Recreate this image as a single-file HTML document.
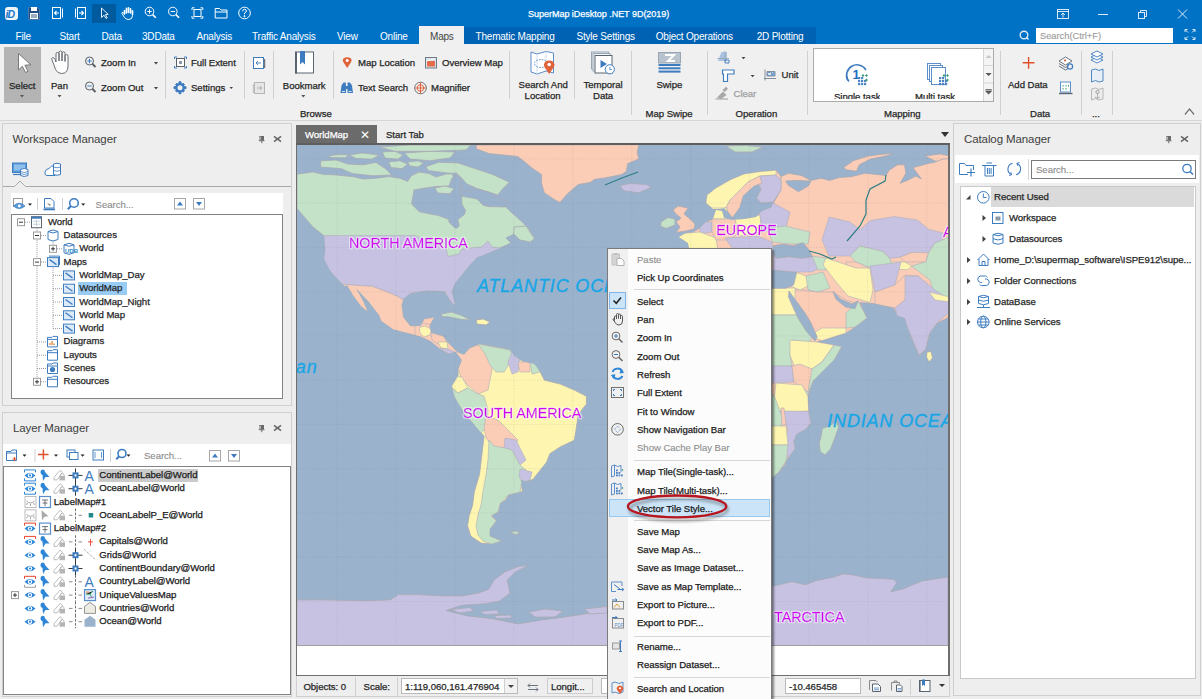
<!DOCTYPE html>
<html><head><meta charset="utf-8"><style>
*{margin:0;padding:0;box-sizing:border-box}
html,body{width:1202px;height:699px;overflow:hidden;background:#EDEDED;font-family:"Liberation Sans",sans-serif;font-size:10px;color:#262626}
.a{position:absolute}
.t{position:absolute;white-space:nowrap;line-height:12px;font-size:9.6px;letter-spacing:-0.05px;-webkit-text-stroke:0.25px currentColor}
#title{left:0;top:0;width:1202px;height:27px;background:#0072C6}
#tabs{left:0;top:27px;width:1202px;height:17px;background:#0072C6}
#ribbon{left:0;top:44px;width:1202px;height:77px;background:#F0F0F0;border-bottom:1px solid #D6D6D6}
.tab{position:absolute;top:30px;color:#fff;font-size:10px;line-height:14px;letter-spacing:-0.2px;white-space:nowrap}
.sep{position:absolute;width:1px;background:#D0D0D0}
.panel{position:absolute;background:#EEEEEE;border:1px solid #CFCFCF}
.ptitle{position:absolute;font-size:11.5px;color:#404040;white-space:nowrap;letter-spacing:-0.1px}
.tree{position:absolute;background:#fff;border:1px solid #828282}
.mi{position:absolute;left:29px;font-size:9.6px;line-height:12px;color:#1a1a1a;white-space:nowrap;letter-spacing:-0.05px;-webkit-text-stroke:0.25px currentColor}
.msep{position:absolute;left:26px;width:136px;height:1px;background:#D7D7D7}

</style></head><body>
<!-- TITLE BAR -->
<div id="title" class="a"></div>
<div id="tabs" class="a"></div>
<div class="a" style="left:464px;top:27px;width:352px;height:17px;background:#0062B2"></div>
<div class="a" style="left:419px;top:26px;width:45px;height:18px;background:#F0F0F0"></div>
<div class="a" style="left:92px;top:4px;width:24px;height:19px;background:#005A9E"></div>
<!--TITLEICONS-->
<svg class="a" style="left:0;top:0" width="260" height="27" viewBox="0 0 260 27">
<g fill="none" stroke="#fff" stroke-width="1">
<rect x="5" y="7" width="13" height="13" rx="3" fill="#F2F6FA" stroke="none"/>
<text x="5.6" y="17.6" font-size="10.5" font-weight="bold" font-style="italic" fill="#1677C9" stroke="none" letter-spacing="-1">iD</text>
<path d="M28.5 7.5 H37.5 L39.5 9.5 V19.5 H28.5 Z" fill="#1D4F86" stroke="#4A78AA" stroke-width="1"/>
<rect x="31" y="7" width="6" height="4" fill="#fff" stroke="none"/>
<rect x="30" y="13" width="8" height="6" fill="#fff" stroke="none"/>
<rect x="31" y="14.5" width="6" height="1" fill="#3A5F8A" stroke="none"/><rect x="31" y="16.5" width="6" height="1" fill="#3A5F8A" stroke="none"/>
<rect x="52.5" y="7.5" width="8" height="11"/>
<path d="M62.5 8.5 V17.5"/><path d="M59 13 H54.5 M56.5 11 L54.5 13 L56.5 15" stroke-width="1.1"/>
<rect x="77.5" y="7.5" width="8" height="11"/>
<path d="M75.5 8.5 V17.5"/><path d="M79 13 H83.5 M81.5 11 L83.5 13 L81.5 15" stroke-width="1.1"/>
</g>
<rect x="93" y="4" width="23" height="18" fill="#005A9E"/>
<path d="M101.5 8 L101.5 17.5 L104 15.2 L106 18.5 L107.3 17.8 L105.4 14.6 L108.2 14.3 Z" fill="none" stroke="#fff" stroke-width="0.9"/>
<g fill="none" stroke="#fff" stroke-width="1">
<path d="M124.5 14 V10.5 M126.5 13 V8.3 M128.5 12.5 V7.8 M130.5 13 V8.8 M132.5 14.5 V10.8" stroke-linecap="round" stroke-width="1.6"/><path d="M124.5 14 L123 12.6 Q121.8 12 121.8 13.2 L124.5 17.5 Q126 19.5 128.8 19.5 Q132.5 19.5 132.5 15.5 V14"/>
<circle cx="149.5" cy="11.5" r="4.3"/><path d="M152.6 14.6 L155.8 17.8" stroke-width="1.6"/><path d="M147.3 11.5 H151.7 M149.5 9.3 V13.7"/>
<circle cx="172.8" cy="11.5" r="4.3"/><path d="M175.9 14.6 L179.1 17.8" stroke-width="1.6"/><path d="M170.6 11.5 H175"/>
<rect x="194" y="9.5" width="7" height="7"/>
<path d="M192 10 V7.8 H194.5 M200.5 7.8 H202.8 V10 M202.8 16 V18.2 H200.5 M194.5 18.2 H192 V16"/>
<path d="M215.2 18 V8.5 H219.5 L221 10 H227 V18 Z M215.2 12 H227"/>
<circle cx="244.5" cy="13" r="5.8"/>
<path d="M242.6 11.3 Q242.6 9.3 244.5 9.3 Q246.4 9.3 246.4 11 Q246.4 12.3 244.5 13 V14.3"/><circle cx="244.5" cy="16.2" r="0.6" fill="#fff"/>
</g>
</svg>
<svg class="a" style="left:1010px;top:0" width="192" height="44" viewBox="1010 0 192 44">
<g fill="none" stroke="#fff" stroke-width="1" stroke-opacity="0.85">
<rect x="1057.5" y="9.5" width="11" height="9"/><path d="M1057.5 11.5 H1068.5 M1063 17.5 V13 M1061 15 L1063 13 L1065 15"/>
<path d="M1098 14.5 H1108"/>
<rect x="1138.5" y="12.5" width="6" height="6"/><path d="M1140.5 12.5 V10.5 H1146.5 V16.5 H1144.5"/>
<path d="M1178 9.5 L1187 18.5 M1187 9.5 L1178 18.5"/>
<circle cx="1024" cy="35" r="3.8" stroke-width="1.4"/><path d="M1026.5 37.5 L1028.5 39.5" stroke-width="1.6"/>
<path d="M1185 32 V29.5 H1187.5 M1192.5 29.5 H1195 V32 M1195 37 V39.5 H1192.5 M1187.5 39.5 H1185 V37 M1185.5 30 L1188 32.5 M1194.5 30 L1192 32.5 M1194.5 39 L1192 36.5 M1185.5 39 L1188 36.5"/>
</g>
</svg>

<div class="t" style="left:528px;top:8px;color:#fff;font-size:9px;letter-spacing:-0.02px">SuperMap iDesktop .NET 9D(2019)</div>
<div class="tab" style="left:15.5px">File</div>
<div class="tab" style="left:59.5px">Start</div>
<div class="tab" style="left:101.5px">Data</div>
<div class="tab" style="left:142px">3DData</div>
<div class="tab" style="left:196.5px">Analysis</div>
<div class="tab" style="left:252px">Traffic Analysis</div>
<div class="tab" style="left:337px">View</div>
<div class="tab" style="left:380px">Online</div>
<div class="tab" style="left:430px;color:#444">Maps</div>
<div class="tab" style="left:475.5px">Thematic Mapping</div>
<div class="tab" style="left:576.5px">Style Settings</div>
<div class="tab" style="left:655.7px">Object Operations</div>
<div class="tab" style="left:756.7px">2D Plotting</div>
<div class="a" style="left:1036px;top:28px;width:137px;height:15px;background:#fff"></div>
<div class="t" style="left:1040px;top:30px;color:#9a9a9a;font-size:9.4px;-webkit-text-stroke:0.1px #9a9a9a">Search(Ctrl+F)</div>

<!-- RIBBON -->
<div id="ribbon" class="a"></div>
<div class="a" style="left:4px;top:47px;width:37px;height:56px;background:#B4B4B4"></div>
<div class="t" style="left:9px;top:80px">Select</div>
<div class="t" style="left:51px;top:80px">Pan</div>
<div class="t" style="left:101px;top:57px">Zoom In</div>
<div class="t" style="left:101px;top:82px">Zoom Out</div>
<div class="t" style="left:191px;top:57px">Full Extent</div>
<div class="t" style="left:191px;top:82px">Settings</div>
<div class="t" style="left:282.8px;top:80px">Bookmark</div>
<div class="t" style="left:300px;top:108px">Browse</div>
<div class="t" style="left:358px;top:57px">Map Location</div>
<div class="t" style="left:358px;top:82px">Text Search</div>
<div class="t" style="left:442px;top:57px">Overview Map</div>
<div class="t" style="left:431px;top:82px">Magnifier</div>
<div class="t" style="left:518.6px;top:79px">Search And</div>
<div class="t" style="left:524.6px;top:90px">Location</div>
<div class="t" style="left:583.5px;top:79px">Temporal</div>
<div class="t" style="left:593px;top:90px">Data</div>
<div class="t" style="left:656.4px;top:79px">Swipe</div>
<div class="t" style="left:645.6px;top:108px">Map Swipe</div>
<div class="t" style="left:781.5px;top:69px">Unit</div>
<div class="t" style="left:733.6px;top:88px;color:#A0A0A0">Clear</div>
<div class="t" style="left:735.5px;top:108px">Operation</div>
<div class="t" style="left:884px;top:108px">Mapping</div>
<div class="t" style="left:1008px;top:79px">Add Data</div>
<div class="t" style="left:1030px;top:108px">Data</div>
<div class="t" style="left:1092px;top:108px">...</div>
<div class="sep" style="left:165px;top:51px;height:48px"></div>
<div class="sep" style="left:244px;top:51px;height:48px"></div>
<div class="sep" style="left:273px;top:51px;height:48px"></div>
<div class="sep" style="left:333px;top:51px;height:48px"></div>
<div class="sep" style="left:509px;top:51px;height:48px"></div>
<div class="sep" style="left:574px;top:51px;height:48px"></div>
<div class="sep" style="left:631px;top:51px;height:64px"></div>
<div class="sep" style="left:707px;top:51px;height:64px"></div>
<div class="sep" style="left:807px;top:51px;height:64px"></div>
<div class="sep" style="left:1000px;top:51px;height:64px"></div>
<div class="sep" style="left:1081px;top:51px;height:64px"></div>
<div class="sep" style="left:1112px;top:51px;height:64px"></div>
<div class="a" style="left:813px;top:48px;width:181px;height:54px;background:#fff;border:1px solid #ABABAB"></div>
<div class="a" style="left:983px;top:49px;width:10px;height:52px;border-left:1px solid #D5D5D5;background:#F4F4F4"></div>
<div class="t" style="left:834px;top:91px;height:8px;overflow:hidden">Single task</div>
<div class="t" style="left:915px;top:91px;height:8px;overflow:hidden">Multi task</div>
<svg class="a" style="left:0;top:44px" width="1202" height="78" viewBox="0 44 1202 78">
<!-- Select cursor -->
<path d="M18.5 53.5 L18.5 70 L22.3 66.3 L25.6 72.5 L28 71.3 L24.9 65.2 L30.8 64.8 Z" fill="#fff" stroke="#6E6E6E" stroke-width="0.9"/>
<path d="M20 95 L24 95 L22 97.5 Z" fill="#555"/>
<!-- Pan hand -->
<path d="M54 65 L52 60 Q51 58 52.6 57.6 Q54 57.4 55 59.5 L56 62 L56 54 Q56 52.4 57.5 52.4 Q59 52.4 59 54 L59 61 L59 52.5 Q59 51 60.5 51 Q62 51 62 52.5 L62 61 L62 53.3 Q62 51.8 63.5 51.8 Q65 51.8 65 53.3 L65 61.5 L65 56 Q65 54.6 66.5 54.6 Q68 54.6 68 56 L68 66 Q68 73.5 61.5 73.5 Q57.5 73.5 55.5 69.5 Z" fill="#fff" stroke="#5A5F66" stroke-width="0.9"/>
<path d="M57.5 95 L61.5 95 L59.5 97.5 Z" fill="#555"/>
<!-- zoom in/out -->
<g fill="none" stroke="#5A5F66" stroke-width="1">
<circle cx="89.5" cy="61" r="4"/><path d="M92.5 64 L95.5 67" stroke-width="2"/>
<circle cx="89.5" cy="86" r="4"/><path d="M92.5 89 L95.5 92" stroke-width="2"/>
</g>
<path d="M87.3 61 H91.7 M89.5 58.8 V63.2 M87.3 86 H91.7" stroke="#3E7CC0" stroke-width="1"/>
<path d="M154 62 L158 62 L156 64.5 Z M154 87 L158 87 L156 89.5 Z" fill="#444"/>
<!-- full extent -->
<rect x="176.5" y="58.5" width="8" height="8" fill="#fff" stroke="#5A5F66"/>
<rect x="179" y="61" width="3" height="3" fill="#8A98A8"/>
<path d="M174.5 59 V57 H177 M184 57 H186.5 V59 M186.5 66 V68 H184 M177 68 H174.5 V66" fill="none" stroke="#3E7CC0"/>
<!-- settings gear -->
<g transform="translate(180,87.7)"><circle r="3.6" fill="none" stroke="#3E7CC0" stroke-width="2.2"/>
<path d="M-1 -6 H1 V-4 H-1 Z M-1 6 H1 V4 H-1 Z M-6 -1 V1 H-4 V-1 Z M6 -1 V1 H4 V-1 Z" fill="#3E7CC0" stroke="#3E7CC0" stroke-width="1"/>
<path d="M-4.5 -3.1 L-3.1 -4.5 L-2 -3.4 L-3.4 -2 Z M4.5 3.1 L3.1 4.5 L2 3.4 L3.4 2 Z M4.5 -3.1 L3.1 -4.5 L2 -3.4 L3.4 -2 Z M-4.5 3.1 L-3.1 4.5 L-2 3.4 L-3.4 2 Z" fill="#3E7CC0" stroke="#3E7CC0" stroke-width="1"/></g>
<path d="M229.5 87 L233 87 L231.3 89 Z" fill="#444"/>
<!-- back / forward -->
<rect x="253.5" y="57.5" width="10" height="11" fill="#fff" stroke="#3E7CC0"/><path d="M264.5 59 V68" stroke="#6E7680" stroke-width="1.5"/>
<path d="M261 63 H256 M258 61 L256 63 L258 65" fill="none" stroke="#3E7CC0" stroke-width="0.9"/>
<rect x="254.5" y="82.5" width="10" height="11" fill="#E6E6E6" stroke="#B5B5B5"/><path d="M253.5 84 V93" stroke="#C5C5C5" stroke-width="1.5"/>
<path d="M257 88 H262 M260 86 L262 88 L260 90" fill="none" stroke="#A8A8A8" stroke-width="0.9"/>
<!-- bookmark -->
<rect x="295.5" y="52" width="18" height="21" fill="#fff" stroke="#5A6470" stroke-width="1"/>
<rect x="295" y="52" width="2" height="21.5" fill="#5A6470"/>
<path d="M300 51 H305 V64.5 L302.5 62 L300 64.5 Z" fill="#3E7CC0"/>
<path d="M301.3 95 L305.3 95 L303.3 97.5 Z" fill="#555"/>
<!-- map location pin -->
<path d="M347.2 68 L343.6 62.5 Q342.6 61 342.8 59.8 Q343.3 57.3 347.2 57.3 Q351 57.3 351.6 59.8 Q351.8 61 350.8 62.5 Z" fill="#E0623A"/>
<circle cx="347.2" cy="60.6" r="1.5" fill="#fff"/>
<!-- binoculars -->
<g fill="#3E7CC0"><path d="M340.5 93 L341.5 85.5 L343.5 82.5 L345.8 82.5 L346 93 Z"/><path d="M347.5 93 L347.6 82.5 L350 82.5 L352 85.5 L353 93 Z"/><rect x="345" y="86" width="3.5" height="3"/></g>
<path d="M342 91.5 H345 M348.5 91.5 H351.5" stroke="#fff" stroke-width="0.8"/>
<!-- overview map -->
<rect x="425.5" y="57.5" width="11" height="10.5" fill="#DDE3EA" stroke="#707A86"/>
<rect x="427" y="61" width="8" height="5.5" fill="#E46C4A"/>
<path d="M427 61 L435 58.5" stroke="#fff" stroke-width="0.8"/>
<!-- magnifier -->
<circle cx="420.5" cy="88" r="5.8" fill="#F4F4F4" stroke="#6E6E6E"/>
<circle cx="420.5" cy="88" r="3.3" fill="none" stroke="#E0623A" stroke-width="1"/>
<path d="M420.5 82.8 V93.2 M415.3 88 H425.7" stroke="#E0623A" stroke-width="1"/>
<!-- search and location -->
<path d="M531 52 L537 54 L546 51.5 L553.5 53 L553.5 73 L546 71 L537 74 L531 72 Z" fill="#fff" stroke="#5C8FC9" stroke-width="1"/>
<path d="M537 54 L537 74 M546 51.5 L546 71" stroke="#C9D8EA" stroke-width="0.8"/>
<ellipse cx="541" cy="63.5" rx="6.5" ry="4" fill="none" stroke="#5C8FC9" stroke-dasharray="1.6 1.2"/>
<path d="M549.2 74 L544.8 67.6 Q543.8 66 544 64.5 Q544.6 60.5 549.2 60.5 Q553.8 60.5 554.4 64.5 Q554.6 66 553.6 67.6 Z" fill="#E0623A"/>
<circle cx="549.2" cy="64.5" r="1.8" fill="#fff"/>
<!-- temporal -->
<rect x="591.5" y="52" width="17" height="17" fill="#E9EEF4" stroke="#9AA6B4"/>
<rect x="593" y="53.5" width="17" height="17.5" fill="#F2F5F9" stroke="#9AA6B4"/>
<rect x="595" y="55.5" width="17" height="17.5" fill="#fff" stroke="#5A6470"/>
<path d="M600.5 60 L607 64 L600.5 68 Z" fill="#3E7CC0"/>
<circle cx="609.8" cy="69.3" r="4.6" fill="#fff" stroke="#3E7CC0"/>
<path d="M609.8 66.8 V69.5 H612" fill="none" stroke="#3E7CC0" stroke-width="0.8"/>
<!-- swipe -->
<rect x="658.5" y="52.5" width="22" height="10.5" fill="#B9C3CF" stroke="#9AA6B4"/>
<path d="M665 55 H674 L668 61 H675" fill="none" stroke="#fff" stroke-width="2"/>
<rect x="658.5" y="64" width="22" height="2" fill="#3E7CC0"/>
<rect x="658.5" y="67.3" width="22" height="2" fill="#3E7CC0"/>
<rect x="658.5" y="70.6" width="22" height="2" fill="#3E7CC0"/>
<!-- operation icons -->
<path d="M718 61 L721.5 52 L727 52 L727 61 Z" fill="#A9C2DF"/>
<path d="M717 58.5 H729 M725 51 V62" stroke="#98A6B6" stroke-width="0.8"/>
<path d="M725 60 h4 v3 h-4 z" fill="none" stroke="#3E7CC0" stroke-width="0.9"/>
<path d="M741.5 57 L745.5 57 L743.5 59.2 Z M750.6 75 L754.6 75 L752.6 77.2 Z" fill="#444"/>
<path d="M722.5 70 H734 V74 H727.5 V81.5 H723.5 V74 H722.5 Z" fill="#fff" stroke="#3E7CC0" stroke-width="1.2"/>
<path d="M765 69.5 V80.5 M764 78.5 H776 M767 71.5 H775 V76 H767 Z" fill="none" stroke="#6C7886" stroke-width="0.8"/>
<text x="766.8" y="75.8" font-size="5" fill="#3E7CC0" font-weight="bold">CM</text>
<path d="M717 97.5 L723 91.5 L726.5 95 L721 99 Z" fill="#A8A8A8"/><path d="M722.5 90 L726 86.8 L728 88.8 L724.8 92" fill="#A8A8A8"/><path d="M715.5 99 H728" stroke="#A8A8A8" stroke-width="1.2"/>
<!-- gallery icons -->
<path d="M848 80.5 A 10 10 0 1 1 866 70" fill="none" stroke="#3E7CC0" stroke-width="1.6"/>
<path d="M846.5 76 A 10 10 0 0 0 849 81.5" fill="none" stroke="#3E7CC0" stroke-width="1.6"/>
<text x="852.5" y="78.5" font-size="13" fill="#1E6FBF" font-weight="bold">1</text>
<g fill="#4B83C4"><rect x="858" y="77" width="2.2" height="2.2"/><rect x="861" y="77" width="2.2" height="2.2"/><rect x="858" y="80" width="2.2" height="2.2"/><rect x="861" y="80" width="2.2" height="2.2"/><rect x="858" y="83" width="2.2" height="2.2"/><rect x="861" y="83" width="2.2" height="2.2"/><rect x="864" y="80" width="2.2" height="2.2"/><rect x="864" y="83" width="2.2" height="2.2"/></g>
<path d="M866.5 74 L868 75.5 L866.5 77 L865 75.5 Z M866.5 78.5 L868 80 L866.5 81.5 L865 80 Z M863 74 L864.5 75.5 L863 77 L861.5 75.5 Z" fill="#3A9A78"/>
<rect x="927.5" y="63.5" width="13" height="16" fill="#fff" stroke="#5C8FC9"/>
<rect x="929.5" y="65.5" width="13" height="16" fill="#fff" stroke="#5C8FC9"/>
<rect x="931.5" y="67.5" width="14" height="17" fill="#fff" stroke="#5C8FC9"/>
<g fill="#4B83C4"><rect x="939" y="77" width="2.2" height="2.2"/><rect x="942" y="77" width="2.2" height="2.2"/><rect x="939" y="80" width="2.2" height="2.2"/><rect x="942" y="80" width="2.2" height="2.2"/><rect x="939" y="83" width="2.2" height="2.2"/><rect x="942" y="83" width="2.2" height="2.2"/><rect x="945" y="80" width="2.2" height="2.2"/><rect x="945" y="83" width="2.2" height="2.2"/></g>
<path d="M947.5 74 L949 75.5 L947.5 77 L946 75.5 Z M947.5 78.5 L949 80 L947.5 81.5 L946 80 Z M944 74 L945.5 75.5 L944 77 L942.5 75.5 Z" fill="#3A9A78"/>
<path d="M985.5 58 L988.6 55 L991.7 58 Z" fill="#C8C8C8"/>
<path d="M985.5 73 L991.7 73 L988.6 76 Z" fill="#555"/>
<path d="M985.5 89.5 H991.7 M985.5 91 L991.7 91 L988.6 94 Z" stroke="#555" stroke-width="0.8" fill="#555"/>
<path d="M984 65.5 H993 M984 83 H993" stroke="#D5D5D5"/>
<!-- add data -->
<path d="M1028.6 57 V68.7 M1022.7 62.8 H1034.5" stroke="#E0502A" stroke-width="1.4"/>
<g fill="none" stroke="#5A6470" stroke-width="0.9"><path d="M1059 61 L1065.5 57 L1072 61 L1065.5 65 Z" fill="#fff"/><path d="M1059 63.5 L1065.5 67.5 L1069 65.5 M1059 66 L1065.5 70 L1068 68.5"/></g>
<circle cx="1065" cy="60.5" r="1" fill="#E0502A"/><circle cx="1070" cy="66.5" r="2.6" fill="none" stroke="#3E7CC0" stroke-width="1.2"/>
<rect x="1060.5" y="82" width="10" height="10" fill="#fff" stroke="#5C8FC9"/><path d="M1059 93.5 H1072.5" stroke="#5A6470" stroke-width="1.4"/>
<path d="M1063 85 v1.5 M1066 85 v1.5 M1063 88 v1.5 M1066 88 v1.5 M1068.5 85 v1.5" stroke="#3A9A78" stroke-width="1"/>
<!-- misc column -->
<g fill="#fff" stroke="#3E7CC0" stroke-width="0.9"><path d="M1091 60 L1097 63 L1103 60 L1097 57 Z"/><path d="M1091 57 L1097 60 L1103 57 L1097 54 Z"/><path d="M1091 54 L1097 57 L1103 54 L1097 51 Z"/></g>
<path d="M1091.5 70 L1095.5 69 L1099 70.5 L1103 69 V81 L1099 82 L1095.5 80.5 L1091.5 82 Z" fill="#E8EEF6" stroke="#3E7CC0" stroke-width="0.9"/>
<path d="M1091.5 89 L1095.5 88 L1099 89.5 L1103 88 V99 L1099 100 L1095.5 98.5 L1091.5 100 Z" fill="#EDEDED" stroke="#B0B0B0" stroke-width="0.9"/>
<circle cx="1097.5" cy="92" r="1.6" fill="none" stroke="#A0A0A0"/><path d="M1097.5 93.5 V98.5 M1095 97 Q1097.5 99.5 1100 97" fill="none" stroke="#A0A0A0" stroke-width="0.8"/>
<path d="M1185 114.5 L1189.5 109 L1194 114.5" fill="none" stroke="#707070" stroke-width="1.3"/>
<path d="M1186.5 114.5 L1189.5 111.2 L1192.5 114.5" fill="none" stroke="#fff" stroke-width="0.8"/>
</svg>


<!-- WORKSPACE MANAGER -->
<div class="panel" style="left:2px;top:123px;width:290px;height:283px"></div>
<div class="ptitle" style="left:12.5px;top:133px">Workspace Manager</div>

<div class="a" style="left:11px;top:193px;width:272px;height:21px;background:#fff"></div>
<div class="t" style="left:95.6px;top:199px;color:#8a8a8a;-webkit-text-stroke:0.1px #8a8a8a">Search...</div>
<div class="tree" style="left:11px;top:214px;width:272px;height:185px"></div>
<svg class="a" style="left:0;top:0" width="300" height="410" viewBox="0 0 300 410">
<rect x="12.5" y="163" width="14" height="9.5" fill="#5B9BD9" stroke="#3E7CC0"/><rect x="14" y="164.5" width="11" height="6" fill="#8EC0EE"/><path d="M13 174.5 H20" stroke="#3E7CC0" stroke-width="1.2"/>
<path d="M20.5 169.5 Q24.3 167.5 28 169.5 V175.5 Q24.3 177.5 20.5 175.5 Z" fill="#fff" stroke="#3E7CC0"/><path d="M20.5 171.5 Q24.3 173.5 28 171.5 M20.5 173.5 Q24.3 175.5 28 173.5" fill="none" stroke="#3E7CC0" stroke-width="0.8"/>
<path d="M47 175.5 Q44.5 175.5 45 172 Q45.5 169 49 168.5 Q51 165 55 166 L55 175.5 Z" fill="#fff" stroke="#3E7CC0"/>
<path d="M53.5 164 Q57 162.5 60.5 164 V174.5 Q57 176 53.5 174.5 Z" fill="#fff" stroke="#3E7CC0"/><path d="M53.5 167 Q57 168.5 60.5 167 M53.5 170.5 Q57 172 60.5 170.5" fill="none" stroke="#3E7CC0" stroke-width="0.8"/>
<path d="M3 186.5 H14.5 L20 181 L25.5 186.5 H291" fill="none" stroke="#A9A9A9"/>
<rect x="13.5" y="198.5" width="9" height="8" fill="#fff" stroke="#9A9A9A"/><path d="M13.5 206 Q19 200.5 25 206 Q19 211 13.5 206 Z" fill="#5B9BD9" stroke="#3E7CC0" stroke-width="0.8"/><circle cx="19.3" cy="206" r="1.4" fill="#fff"/>
<path d="M28 203.5 H32 L30 205.8 Z" fill="#222"/>
<path d="M37.5 198 V210" stroke="#D0D0D0"/><path d="M62.5 198 V210" stroke="#D0D0D0"/>
<path d="M44.5 198.5 H51 L54 201.5 V208 H44.5 Z" fill="#fff" stroke="#3E7CC0"/><rect x="43.5" y="208.5" width="11.5" height="1.8" fill="#3E7CC0"/><path d="M47 203 L51 204.5 L49.5 206 Z" fill="#8A8A8A"/>
<circle cx="74" cy="203" r="4.3" fill="none" stroke="#3E7CC0" stroke-width="1.6"/><path d="M71 206 L67.8 209.3" stroke="#3E7CC0" stroke-width="2"/><path d="M81.2 203.5 H85.2 L83.2 205.8 Z" fill="#222"/>
<rect x="174.5" y="198.5" width="11" height="10.5" fill="#fff" stroke="#A6A6A6"/><path d="M177 205.5 L180 201.5 L183 205.5 Z" fill="#3E7CC0"/>
<rect x="193.5" y="198.5" width="11" height="10.5" fill="#fff" stroke="#A6A6A6"/><path d="M196 202 L199 206 L202 202 Z" fill="#3E7CC0"/>
<path d="M37 228.2 V381.8 M53 241.5 V248.79999999999998 M53 268.1 V328.6" fill="none" stroke="#9A9A9A" stroke-width="1" stroke-dasharray="1 1"/>
<path d="M25 222.2 H30 M41 235.5 H46 M57 248.8 H62 M41 262.1 H46 M53 275.4 H62 M53 288.7 H62 M53 302.0 H62 M53 315.3 H62 M53 328.6 H62 M37 341.9 H46 M37 355.2 H46 M37 368.5 H46 M41 381.8 H46" fill="none" stroke="#9A9A9A" stroke-width="1" stroke-dasharray="1 1"/>
<rect x="17.5" y="218.7" width="7" height="7" fill="#fff" stroke="#9A9A9A"/><path d="M19 222.2 H23" stroke="#333"/>
<rect x="31.5" y="216.7" width="10" height="11" fill="#fff" stroke="#5A6470"/><rect x="31.5" y="216.7" width="10" height="2" fill="#3E7CC0"/><path d="M33 221.2 H40 M33 224.2 H40 M36.5 220.2 V226.2" stroke="#B8C4D0" stroke-width="0.8"/>
<rect x="33.5" y="232.0" width="7" height="7" fill="#fff" stroke="#9A9A9A"/><path d="M35 235.5 H39" stroke="#333"/>
<path d="M48 231.5 Q53 228.5 58 231.5 V239.5 Q53 242.5 48 239.5 Z" fill="#fff" stroke="#3E7CC0"/><path d="M48 231.5 Q53 234.5 58 231.5" fill="none" stroke="#3E7CC0"/>
<rect x="49.5" y="245.3" width="7" height="7" fill="#fff" stroke="#9A9A9A"/><path d="M51 248.8 H55" stroke="#333"/><path d="M53 246.8 V250.8" stroke="#333"/>
<path d="M64 244.8 Q69 241.8 74 244.8 V252.8 Q69 255.8 64 252.8 Z" fill="#fff" stroke="#3E7CC0"/><path d="M64 244.8 Q69 247.8 74 244.8" fill="none" stroke="#3E7CC0"/>
<text x="65" y="253.3" font-size="6" fill="#2E8BC9" font-weight="bold">UDB</text>
<rect x="33.5" y="258.6" width="7" height="7" fill="#fff" stroke="#9A9A9A"/><path d="M35 262.1 H39" stroke="#333"/>
<rect x="47.5" y="257.6" width="11" height="9" fill="#DDEBF8" stroke="#3E7CC0"/><path d="M49.5 259.6 L56.5 264.6" stroke="#3E7CC0" stroke-width="1.3"/>
<path d="M49 256.1 H59.5 V265.1" fill="none" stroke="#3E7CC0"/>
<rect x="63.5" y="270.9" width="11" height="9" fill="#DDEBF8" stroke="#3E7CC0"/><path d="M65.5 272.9 L72.5 277.9" stroke="#3E7CC0" stroke-width="1.3"/>
<rect x="63.5" y="284.2" width="11" height="9" fill="#DDEBF8" stroke="#3E7CC0"/><path d="M65.5 286.2 L72.5 291.2" stroke="#3E7CC0" stroke-width="1.3"/>
<rect x="63.5" y="297.5" width="11" height="9" fill="#DDEBF8" stroke="#3E7CC0"/><path d="M65.5 299.5 L72.5 304.5" stroke="#3E7CC0" stroke-width="1.3"/>
<rect x="63.5" y="310.8" width="11" height="9" fill="#DDEBF8" stroke="#3E7CC0"/><path d="M65.5 312.8 L72.5 317.8" stroke="#3E7CC0" stroke-width="1.3"/>
<rect x="63.5" y="324.1" width="11" height="9" fill="#DDEBF8" stroke="#3E7CC0"/><path d="M65.5 326.1 L72.5 331.1" stroke="#3E7CC0" stroke-width="1.3"/>
<path d="M47.5 337.4 H52 L53 336.4 H57.5 V346.9 H47.5 Z" fill="#fff" stroke="#3E7CC0"/><path d="M47.5 339.4 H57.5" stroke="#3E7CC0"/>
<path d="M50 344.9 V342.9 M52 344.9 V340.9 M54 344.9 V343.4" stroke="#E07A2A" stroke-width="1.2"/>
<path d="M47.5 350.7 H52 L53 349.7 H57.5 V360.2 H47.5 Z" fill="#fff" stroke="#3E7CC0"/><path d="M47.5 352.7 H57.5" stroke="#3E7CC0"/>
<path d="M47.5 364.0 H52 L53 363.0 H57.5 V373.5 H47.5 Z" fill="#fff" stroke="#3E7CC0"/><path d="M47.5 366.0 H57.5" stroke="#3E7CC0"/>
<circle cx="52.5" cy="369.5" r="2.6" fill="#3E7CC0"/>
<rect x="33.5" y="378.3" width="7" height="7" fill="#fff" stroke="#9A9A9A"/><path d="M35 381.8 H39" stroke="#333"/><path d="M37 379.8 V383.8" stroke="#333"/>
<path d="M47.5 377.3 H52 L53 376.3 H57.5 V386.8 H47.5 Z" fill="#fff" stroke="#3E7CC0"/><path d="M47.5 379.3 H57.5" stroke="#3E7CC0"/>
</svg>
<div class="a" style="left:77.6px;top:282px;width:49px;height:13.3px;background:#99CCF5"></div>
<div class="t" style="left:47.9px;top:215.7px">World</div>
<div class="t" style="left:63.6px;top:229.0px">Datasources</div>
<div class="t" style="left:79.2px;top:242.3px">World</div>
<div class="t" style="left:63.6px;top:255.6px">Maps</div>
<div class="t" style="left:79.2px;top:268.9px">WorldMap_Day</div>
<div class="t" style="left:79.2px;top:282.2px">WorldMap</div>
<div class="t" style="left:79.2px;top:295.5px">WorldMap_Night</div>
<div class="t" style="left:79.2px;top:308.8px">World Map</div>
<div class="t" style="left:79.2px;top:322.1px">World</div>
<div class="t" style="left:63.6px;top:335.4px">Diagrams</div>
<div class="t" style="left:63.6px;top:348.7px">Layouts</div>
<div class="t" style="left:63.6px;top:362.0px">Scenes</div>
<div class="t" style="left:63.6px;top:375.3px">Resources</div>

<!-- LAYER MANAGER -->
<div class="panel" style="left:2px;top:412px;width:290px;height:285px"></div>
<div class="ptitle" style="left:12.9px;top:422px">Layer Manager</div>
<div class="a" style="left:3px;top:444px;width:288px;height:22px;background:#fff"></div>
<div class="t" style="left:144px;top:450px;color:#8a8a8a;-webkit-text-stroke:0.1px #8a8a8a">Search...</div>
<div class="tree" style="left:3px;top:466px;width:288px;height:229px"></div>
<div class="a" style="left:98px;top:469px;width:100px;height:13px;background:#CBCBCB"></div>
<svg class="a" style="left:0;top:440px" width="300" height="200" viewBox="0 440 300 200">
<path d="M6.5 451.5 H11 L12 450 H16.5 V460.5 H6.5 Z M6.5 453 H16.5" fill="#fff" stroke="#3E7CC0"/><path d="M14.5 457 V461 M12.5 459 H16.5" stroke="#E0502A" stroke-width="1.2"/>
<path d="M22.5 454.5 H26.5 L24.5 456.7 Z M54 454.5 H58 L56 456.7 Z M80.6 454.5 H84.6 L82.6 456.7 Z M126.5 454.5 H130.5 L128.5 456.7 Z" fill="#222"/>
<path d="M35 449 V462 M110.5 449 V462" stroke="#D0D0D0"/>
<path d="M43.4 449.5 V459.5 M38 454.5 H48.5" stroke="#E0502A" stroke-width="1.5"/>
<rect x="67" y="450" width="8" height="7" fill="#fff" stroke="#3E7CC0"/><rect x="69.5" y="452.5" width="8.5" height="7" fill="#fff" stroke="#3E7CC0"/>
<rect x="93" y="450" width="10.5" height="10" fill="#fff" stroke="#3E7CC0"/><path d="M95 458 V452 M101.5 452 V458" stroke="#3E7CC0" stroke-width="0.8"/>
<circle cx="122" cy="453.5" r="4" fill="none" stroke="#3E7CC0" stroke-width="1.6"/><path d="M119.2 456.3 L116.3 459.3" stroke="#3E7CC0" stroke-width="2"/>
<rect x="209.5" y="450.5" width="11" height="10.5" fill="#fff" stroke="#A6A6A6"/><path d="M212 457.5 L215 453.5 L218 457.5 Z" fill="#3E7CC0"/>
<rect x="228.5" y="450.5" width="11" height="10.5" fill="#fff" stroke="#A6A6A6"/><path d="M231 454 L234 458 L237 454 Z" fill="#3E7CC0"/>
<path d="M24.5 475.4 Q30.0 469.9 35.5 475.4 Q30.0 480.9 24.5 475.4 Z" fill="#2E86D6"/><circle cx="30.0" cy="475.4" r="2.2" fill="#fff"/><circle cx="30.0" cy="475.4" r="1.1" fill="#2E86D6"/>
<path d="M24.5 472.4 V469.9 H35.5 V472.4 M24.5 478.4 V480.9 H35.5 V478.4" fill="none" stroke="#2E86D6"/>
<path d="M40.5 472.4 Q40.5 469.4 43 469.4 Q45 469.4 45 471.9 L49.5 476.9 L45.5 476.9 L43 480.9 L42.5 474.9 Q40.5 473.9 40.5 472.4 Z" fill="#2E86D6"/>
<path d="M54 479.9 L54 477.4 L60 470.4 L62.5 472.4 L57 479.9 Z" fill="none" stroke="#B5B5B5" stroke-width="0.9"/><rect x="59.5" y="475.9" width="5.5" height="4.5" fill="#B5B5B5"/><path d="M60.5 475.9 V474.4 Q62.25 472.4 64 474.4 V475.9" fill="none" stroke="#B5B5B5" stroke-width="0.9"/>
<path d="M68.5 475.4 H82.5 M75.5 468.4 V482.4" stroke="#303840" stroke-width="1"/><rect x="72.5" y="472.4" width="6" height="6" fill="#3E7CC0"/><rect x="74.5" y="474.4" width="2" height="2" fill="#fff"/>
<text x="84.5" y="480.9" font-size="14" fill="#3E7CC0">A</text>
<path d="M24.5 488.7 Q30.0 483.2 35.5 488.7 Q30.0 494.2 24.5 488.7 Z" fill="#2E86D6"/><circle cx="30.0" cy="488.7" r="2.2" fill="#fff"/><circle cx="30.0" cy="488.7" r="1.1" fill="#2E86D6"/>
<path d="M24.5 485.7 V483.2 H35.5 V485.7 M24.5 491.7 V494.2 H35.5 V491.7" fill="none" stroke="#2E86D6"/>
<path d="M40.5 485.7 Q40.5 482.7 43 482.7 Q45 482.7 45 485.2 L49.5 490.2 L45.5 490.2 L43 494.2 L42.5 488.2 Q40.5 487.2 40.5 485.7 Z" fill="#2E86D6"/>
<path d="M54 493.2 L54 490.7 L60 483.7 L62.5 485.7 L57 493.2 Z" fill="none" stroke="#B5B5B5" stroke-width="0.9"/><rect x="59.5" y="489.2" width="5.5" height="4.5" fill="#B5B5B5"/><path d="M60.5 489.2 V487.7 Q62.25 485.7 64 487.7 V489.2" fill="none" stroke="#B5B5B5" stroke-width="0.9"/>
<path d="M68.5 488.7 H82.5 M75.5 481.7 V495.7" stroke="#303840" stroke-width="1"/><rect x="72.5" y="485.7" width="6" height="6" fill="#3E7CC0"/><rect x="74.5" y="487.7" width="2" height="2" fill="#fff"/>
<text x="84.5" y="494.2" font-size="14" fill="#3E7CC0">A</text>
<rect x="25.0" y="496.5" width="11" height="11" fill="none" stroke="#BDBDBD"/><path d="M26.5 501.0 Q30.5 505.0 34.5 501.0 M27.5 503.0 L26.5 505.0 M30.5 504.0 V506.0 M33.5 503.0 L34.5 505.0" fill="none" stroke="#9A9A9A" stroke-width="0.9"/>
<rect x="39.5" y="496.5" width="11" height="11" fill="#fff" stroke="#5C8FC9" stroke-width="1.2"/><path d="M42 500.0 H48 M45 500.0 V506.0 M42.5 503.0 H47.5" stroke="#505050" stroke-width="0.8"/>
<rect x="25.0" y="509.8" width="11" height="11" fill="none" stroke="#BDBDBD"/><path d="M26.5 514.3 Q30.5 518.3 34.5 514.3 M27.5 516.3 L26.5 518.3 M30.5 517.3 V519.3 M33.5 516.3 L34.5 518.3" fill="none" stroke="#9A9A9A" stroke-width="0.9"/>
<path d="M41.5 510.3 L48.5 516.3 L44.5 516.8 L42 520.3 Z" fill="#A8A8A8"/>
<path d="M54 519.8 L54 517.3 L60 510.3 L62.5 512.3 L57 519.8 Z" fill="none" stroke="#B5B5B5" stroke-width="0.9"/><rect x="59.5" y="515.8" width="5.5" height="4.5" fill="#B5B5B5"/><path d="M60.5 515.8 V514.3 Q62.25 512.3 64 514.3 V515.8" fill="none" stroke="#B5B5B5" stroke-width="0.9"/>
<path d="M69 515.3 H72.5 M78.5 515.3 H82" stroke="#8A8A8A" stroke-width="1"/><path d="M75.5 508.7 V521.9" stroke="#6A6A6A" stroke-width="1" stroke-dasharray="2.5 1.5"/>
<rect x="88.7" y="513.0" width="4.5" height="4.5" fill="#1E8A8A"/>
<path d="M24.5 528.6 Q30.0 523.1 35.5 528.6 Q30.0 534.1 24.5 528.6 Z" fill="#2E86D6"/><circle cx="30.0" cy="528.6" r="2.2" fill="#fff"/><circle cx="30.0" cy="528.6" r="1.1" fill="#2E86D6"/>
<path d="M24.5 525.6 V523.1 H35.5 V525.6" fill="none" stroke="#E8402A"/>
<rect x="39.5" y="523.1" width="11" height="11" fill="#fff" stroke="#5C8FC9" stroke-width="1.2"/><path d="M42 526.6 H48 M45 526.6 V532.6 M42.5 529.6 H47.5" stroke="#505050" stroke-width="0.8"/>
<path d="M24.5 541.9 Q30.0 536.4 35.5 541.9 Q30.0 547.4 24.5 541.9 Z" fill="#2E86D6"/><circle cx="30.0" cy="541.9" r="2.2" fill="#fff"/><circle cx="30.0" cy="541.9" r="1.1" fill="#2E86D6"/>
<path d="M24.5 538.9 V536.4 H35.5 V538.9" fill="none" stroke="#E8402A"/>
<path d="M40.5 538.9 Q40.5 535.9 43 535.9 Q45 535.9 45 538.4 L49.5 543.4 L45.5 543.4 L43 547.4 L42.5 541.4 Q40.5 540.4 40.5 538.9 Z" fill="#2E86D6"/>
<path d="M54 546.4 L54 543.9 L60 536.9 L62.5 538.9 L57 546.4 Z" fill="none" stroke="#B5B5B5" stroke-width="0.9"/><rect x="59.5" y="542.4" width="5.5" height="4.5" fill="#B5B5B5"/><path d="M60.5 542.4 V540.9 Q62.25 538.9 64 540.9 V542.4" fill="none" stroke="#B5B5B5" stroke-width="0.9"/>
<path d="M69 541.9 H72.5 M78.5 541.9 H82" stroke="#8A8A8A" stroke-width="1"/><path d="M75.5 535.3 V548.5" stroke="#6A6A6A" stroke-width="1" stroke-dasharray="2.5 1.5"/>
<path d="M90.5 538.9 V545.9 M88 541.9 H93" stroke="#E8402A" stroke-width="0.9"/>
<path d="M24.5 555.2 Q30.0 549.7 35.5 555.2 Q30.0 560.7 24.5 555.2 Z" fill="#2E86D6"/><circle cx="30.0" cy="555.2" r="2.2" fill="#fff"/><circle cx="30.0" cy="555.2" r="1.1" fill="#2E86D6"/>
<path d="M40.5 552.2 Q40.5 549.2 43 549.2 Q45 549.2 45 551.7 L49.5 556.7 L45.5 556.7 L43 560.7 L42.5 554.7 Q40.5 553.7 40.5 552.2 Z" fill="#2E86D6"/>
<path d="M54 559.7 L54 557.2 L60 550.2 L62.5 552.2 L57 559.7 Z" fill="none" stroke="#B5B5B5" stroke-width="0.9"/><rect x="59.5" y="555.7" width="5.5" height="4.5" fill="#B5B5B5"/><path d="M60.5 555.7 V554.2 Q62.25 552.2 64 554.2 V555.7" fill="none" stroke="#B5B5B5" stroke-width="0.9"/>
<path d="M68.5 555.2 H82.5 M75.5 548.2 V562.2" stroke="#303840" stroke-width="1"/><rect x="72.5" y="552.2" width="6" height="6" fill="#3E7CC0"/><rect x="74.5" y="554.2" width="2" height="2" fill="#fff"/>
<path d="M84 549.2 L95 559.2" stroke="#707070" stroke-width="0.8" stroke-dasharray="1 1"/>
<path d="M24.5 568.5 Q30.0 563.0 35.5 568.5 Q30.0 574.0 24.5 568.5 Z" fill="#2E86D6"/><circle cx="30.0" cy="568.5" r="2.2" fill="#fff"/><circle cx="30.0" cy="568.5" r="1.1" fill="#2E86D6"/>
<path d="M40.5 565.5 Q40.5 562.5 43 562.5 Q45 562.5 45 565.0 L49.5 570.0 L45.5 570.0 L43 574.0 L42.5 568.0 Q40.5 567.0 40.5 565.5 Z" fill="#2E86D6"/>
<path d="M54 573.0 L54 570.5 L60 563.5 L62.5 565.5 L57 573.0 Z" fill="none" stroke="#B5B5B5" stroke-width="0.9"/><rect x="59.5" y="569.0" width="5.5" height="4.5" fill="#B5B5B5"/><path d="M60.5 569.0 V567.5 Q62.25 565.5 64 567.5 V569.0" fill="none" stroke="#B5B5B5" stroke-width="0.9"/>
<path d="M68.5 568.5 H82.5 M75.5 561.5 V575.5" stroke="#303840" stroke-width="1"/><rect x="72.5" y="565.5" width="6" height="6" fill="#3E7CC0"/><rect x="74.5" y="567.5" width="2" height="2" fill="#fff"/>
<path d="M24.5 581.8 Q30.0 576.3 35.5 581.8 Q30.0 587.3 24.5 581.8 Z" fill="#2E86D6"/><circle cx="30.0" cy="581.8" r="2.2" fill="#fff"/><circle cx="30.0" cy="581.8" r="1.1" fill="#2E86D6"/>
<path d="M24.5 578.8 V576.3 H35.5 V578.8" fill="none" stroke="#E8402A"/>
<path d="M24.5 584.8 V587.3 H35.5 V584.8" fill="none" stroke="#A0A0A0"/>
<path d="M40.5 578.8 Q40.5 575.8 43 575.8 Q45 575.8 45 578.3 L49.5 583.3 L45.5 583.3 L43 587.3 L42.5 581.3 Q40.5 580.3 40.5 578.8 Z" fill="#2E86D6"/>
<path d="M54 586.3 L54 583.8 L60 576.8 L62.5 578.8 L57 586.3 Z" fill="none" stroke="#B5B5B5" stroke-width="0.9"/><rect x="59.5" y="582.3" width="5.5" height="4.5" fill="#B5B5B5"/><path d="M60.5 582.3 V580.8 Q62.25 578.8 64 580.8 V582.3" fill="none" stroke="#B5B5B5" stroke-width="0.9"/>
<path d="M69 581.8 H72.5 M78.5 581.8 H82" stroke="#8A8A8A" stroke-width="1"/><path d="M75.5 575.2 V588.4" stroke="#6A6A6A" stroke-width="1" stroke-dasharray="2.5 1.5"/>
<text x="84.5" y="587.3" font-size="14" fill="#3E7CC0">A</text>
<path d="M24.5 595.1 Q30.0 589.6 35.5 595.1 Q30.0 600.6 24.5 595.1 Z" fill="#2E86D6"/><circle cx="30.0" cy="595.1" r="2.2" fill="#fff"/><circle cx="30.0" cy="595.1" r="1.1" fill="#2E86D6"/>
<path d="M40.5 592.1 Q40.5 589.1 43 589.1 Q45 589.1 45 591.6 L49.5 596.6 L45.5 596.6 L43 600.6 L42.5 594.6 Q40.5 593.6 40.5 592.1 Z" fill="#2E86D6"/>
<path d="M54 599.6 L54 597.1 L60 590.1 L62.5 592.1 L57 599.6 Z" fill="none" stroke="#B5B5B5" stroke-width="0.9"/><rect x="59.5" y="595.6" width="5.5" height="4.5" fill="#B5B5B5"/><path d="M60.5 595.6 V594.1 Q62.25 592.1 64 594.1 V595.6" fill="none" stroke="#B5B5B5" stroke-width="0.9"/>
<path d="M69 595.1 H72.5 M78.5 595.1 H82" stroke="#8A8A8A" stroke-width="1"/><path d="M75.5 588.5 V601.7" stroke="#6A6A6A" stroke-width="1" stroke-dasharray="2.5 1.5"/>
<rect x="84.5" y="589.6" width="11" height="11" fill="#DDEBF8" stroke="#5C8FC9" stroke-width="1.2"/><path d="M86 594.1 H90 L93 591.1 M90 594.1 L92 598.1" stroke="#3A9A78" stroke-width="1"/><path d="M88 598.1 L94 597.1" stroke="#9A6AC0" stroke-width="1"/><path d="M86 592.1 H89" stroke="#E07A2A" stroke-width="1"/>
<rect x="11.5" y="591.6" width="7" height="7" fill="#fff" stroke="#9A9A9A"/><path d="M13 595.1 H17 M15 593.1 V597.1" stroke="#333"/>
<path d="M24.5 608.4 Q30.0 602.9 35.5 608.4 Q30.0 613.9 24.5 608.4 Z" fill="#2E86D6"/><circle cx="30.0" cy="608.4" r="2.2" fill="#fff"/><circle cx="30.0" cy="608.4" r="1.1" fill="#2E86D6"/>
<path d="M40.5 605.4 Q40.5 602.4 43 602.4 Q45 602.4 45 604.9 L49.5 609.9 L45.5 609.9 L43 613.9 L42.5 607.9 Q40.5 606.9 40.5 605.4 Z" fill="#2E86D6"/>
<path d="M54 612.9 L54 610.4 L60 603.4 L62.5 605.4 L57 612.9 Z" fill="none" stroke="#B5B5B5" stroke-width="0.9"/><rect x="59.5" y="608.9" width="5.5" height="4.5" fill="#B5B5B5"/><path d="M60.5 608.9 V607.4 Q62.25 605.4 64 607.4 V608.9" fill="none" stroke="#B5B5B5" stroke-width="0.9"/>
<path d="M69 608.4 H72.5 M78.5 608.4 H82" stroke="#8A8A8A" stroke-width="1"/><path d="M75.5 601.8 V615.0" stroke="#6A6A6A" stroke-width="1" stroke-dasharray="2.5 1.5"/>
<path d="M84.5 613.4 V606.4 L90 602.4 L95.5 606.4 V613.4 Z" fill="#EEEBE2" stroke="#8A8A8A" stroke-width="0.9"/>
<path d="M24.5 621.7 Q30.0 616.2 35.5 621.7 Q30.0 627.2 24.5 621.7 Z" fill="#2E86D6"/><circle cx="30.0" cy="621.7" r="2.2" fill="#fff"/><circle cx="30.0" cy="621.7" r="1.1" fill="#2E86D6"/>
<path d="M40.5 618.7 Q40.5 615.7 43 615.7 Q45 615.7 45 618.2 L49.5 623.2 L45.5 623.2 L43 627.2 L42.5 621.2 Q40.5 620.2 40.5 618.7 Z" fill="#2E86D6"/>
<path d="M54 626.2 L54 623.7 L60 616.7 L62.5 618.7 L57 626.2 Z" fill="none" stroke="#B5B5B5" stroke-width="0.9"/><rect x="59.5" y="622.2" width="5.5" height="4.5" fill="#B5B5B5"/><path d="M60.5 622.2 V620.7 Q62.25 618.7 64 620.7 V622.2" fill="none" stroke="#B5B5B5" stroke-width="0.9"/>
<path d="M69 621.7 H72.5 M78.5 621.7 H82" stroke="#8A8A8A" stroke-width="1"/><path d="M75.5 615.1 V628.3" stroke="#6A6A6A" stroke-width="1" stroke-dasharray="2.5 1.5"/>
<path d="M84.5 626.7 V619.7 L90 615.7 L95.5 619.7 V626.7 Z" fill="#9AB2CC"/>
</svg>
<div class="t" style="left:99.3px;top:468.9px;color:#1a1a1a">ContinentLabel@World</div>
<div class="t" style="left:99.3px;top:482.2px;color:#1a1a1a">OceanLabel@World</div>
<div class="t" style="left:53.8px;top:495.5px;color:#1a1a1a">LabelMap#1</div>
<div class="t" style="left:99.3px;top:508.8px;color:#1a1a1a">OceanLabelP_E@World</div>
<div class="t" style="left:53.8px;top:522.1px;color:#1a1a1a">LabelMap#2</div>
<div class="t" style="left:99.3px;top:535.4px;color:#1a1a1a">Capitals@World</div>
<div class="t" style="left:99.3px;top:548.7px;color:#1a1a1a">Grids@World</div>
<div class="t" style="left:99.3px;top:562.0px;color:#1a1a1a">ContinentBoundary@World</div>
<div class="t" style="left:99.3px;top:575.3px;color:#1a1a1a">CountryLabel@World</div>
<div class="t" style="left:99.3px;top:588.6px;color:#1a1a1a">UniqueValuesMap</div>
<div class="t" style="left:99.3px;top:601.9px;color:#1a1a1a">Countries@World</div>
<div class="t" style="left:99.3px;top:615.2px;color:#1a1a1a">Ocean@World</div>

<!-- DOCUMENT -->
<div class="a" style="left:296px;top:125px;width:81px;height:19px;background:#6B6B6B"></div>
<div class="t" style="left:305px;top:129px;color:#fff">WorldMap</div>
<div class="t" style="left:360px;top:129px;color:#fff;font-size:12px;-webkit-text-stroke:0">&#x2715;</div>
<div class="t" style="left:386px;top:129px">Start Tab</div>
<div class="a" style="left:296px;top:143px;width:654px;height:2px;background:#5E5E5E"></div>
<div class="a" style="left:296px;top:145px;width:1px;height:531px;background:#6E6E6E"></div>
<div class="a" style="left:948px;top:145px;width:2px;height:531px;background:#6E6E6E"></div>
<div class="a" style="left:297px;top:645px;width:651px;height:30px;background:#fff;border-top:1px solid #A0A0A0"></div>
<div class="a" style="left:296px;top:675px;width:654px;height:1px;background:#6E6E6E"></div>
<div class="a" style="left:296px;top:676px;width:654px;height:21px;background:#EEEEEE;border:1px solid #CFCFCF;border-top:none"></div>
<svg class="a" style="left:0;top:0" width="1202" height="699" viewBox="0 0 1202 699">
<defs><clipPath id="mc"><rect x="297" y="145" width="651" height="500"/></clipPath>
<clipPath id="lc"><polygon points="297.0,174.2 312.8,171.9 322.3,174.2 336.5,175.0 352.3,176.6 363.4,179.0 376.0,178.2 388.7,176.6 399.8,178.2 407.7,181.4 411.0,176.0 419.0,172.0 429.0,173.5 436.0,177.0 446.0,174.0 452.0,174.0 456.0,180.0 452.0,186.0 461.0,192.0 477.2,198.9 483.7,205.3 490.1,206.6 500.4,201.5 509.4,210.5 522.3,222.1 530.0,229.8 524.0,233.0 514.0,234.0 506.0,238.0 511.0,243.0 500.0,248.0 482.5,255.2 477.0,257.2 468.8,265.8 461.9,274.4 455.0,282.9 451.6,291.5 455.0,305.3 450.0,301.0 444.7,291.5 427.5,290.7 410.4,293.2 403.5,298.4 401.8,305.3 403.5,317.3 410.4,325.9 420.7,325.9 424.1,319.0 434.4,317.3 429.3,325.9 431.0,332.8 443.0,336.2 448.2,343.1 458.5,353.4 464.0,355.0 467.0,359.0 461.9,356.8 455.0,351.6 448.2,353.4 439.6,348.2 431.0,341.3 420.7,336.2 406.9,332.8 393.2,329.3 381.2,320.7 379.4,315.6 369.0,302.0 356.0,288.0 364.0,303.0 367.4,311.3 361.0,306.0 353.0,295.0 347.0,285.0 344.9,286.3 338.0,279.4 330.0,270.3 324.3,258.9 325.4,249.7 324.3,236.0 312.9,226.9 297.0,208.6"/><polygon points="320.7,160.8 336.5,160.0 347.6,164.0 363.4,164.8 376.0,162.4 385.5,168.7 391.8,175.0 372.9,175.8 352.3,173.5 341.3,168.7 320.7,167.1"/><polygon points="328.6,156.0 338.0,154.5 349.2,155.0 345.0,157.8 331.0,157.6"/><polygon points="349.2,155.0 362.0,152.9 379.2,155.0 372.0,159.2 356.0,158.5"/><polygon points="382.4,152.0 395.0,151.3 403.0,155.0 398.0,159.2 385.0,158.0"/><polygon points="388.7,162.0 400.0,160.8 407.7,164.0 402.0,168.7 391.0,167.5"/><polygon points="407.7,162.0 418.0,160.8 423.5,163.0 418.0,167.1 410.0,166.0"/><polygon points="404.5,153.0 430.0,151.3 455.0,152.0 450.0,158.0 430.0,160.8 410.0,159.0"/><polygon points="379.0,147.0 410.0,145.0 471.0,145.0 466.0,150.0 430.0,151.3 395.0,151.3"/><polygon points="425.7,166.7 438.6,162.2 457.9,162.9 477.2,169.3 492.7,174.5 509.4,182.2 503.0,188.6 497.8,195.0 490.1,192.5 477.2,188.6 466.9,184.0 461.8,178.3 456.6,173.2 448.9,173.2 438.6,171.9 428.3,170.6"/><polygon points="514.0,227.0 526.0,226.0 534.5,238.6 530.0,242.0 520.0,240.0 513.7,234.0"/><polygon points="441.3,313.9 451.6,312.1 461.9,315.6 470.5,319.9 461.9,319.5 448.2,316.8 442.1,316.8"/><polygon points="476.0,320.0 483.0,319.0 490.0,322.0 486.0,325.0 477.0,324.0"/><polygon points="476.2,145.0 638.8,144.7 637.2,152.6 638.8,158.9 627.8,163.6 626.2,171.5 621.5,174.6 605.7,177.8 594.7,179.3 590.0,182.5 578.2,184.5 567.8,193.5 560.0,202.4 555.9,200.5 544.4,192.9 541.5,183.3 541.5,174.6 531.9,168.0 525.2,162.2 517.5,156.4 503.1,155.0 488.8,153.5 476.3,148.8"/><polygon points="619.8,185.6 630.1,183.5 646.8,184.5 651.0,187.6 638.5,192.8 623.9,190.8"/><polygon points="678.0,206.0 688.0,208.0 684.0,214.0 690.0,219.0 695.0,224.0 694.0,229.0 686.0,231.0 676.0,232.5 680.0,227.0 676.0,222.0 681.0,218.0 676.0,214.0 673.0,210.0"/><polygon points="661.0,222.0 668.0,217.5 675.0,219.0 675.0,225.0 666.0,228.5 660.5,226.0"/><polygon points="726.0,146.0 745.0,145.5 763.0,147.0 752.0,152.0 735.0,152.0"/><polygon points="843.6,167.6 853.5,160.6 867.7,156.3 881.8,154.2 893.2,153.5 887.5,155.6 870.5,159.1 859.2,164.8 856.4,171.2 846.5,169.8"/><polygon points="925.0,156.0 940.0,154.0 950.0,156.0 950.0,162.0 935.0,161.0"/><polygon points="713.0,209.0 706.0,203.0 707.0,195.0 716.0,188.0 730.0,180.0 744.0,174.0 761.0,171.5 776.0,170.3 781.0,176.4 781.0,190.0 773.4,201.7 761.3,202.9 756.5,198.0 761.3,189.6 758.9,184.8 754.1,186.0 743.2,195.7 739.6,207.7 735.0,214.0 732.4,217.4 728.0,212.0 724.0,208.0 718.0,209.0"/><polygon points="690.0,252.0 688.0,243.0 679.0,237.0 686.0,233.0 693.0,232.0 700.0,228.0 706.0,222.0 713.0,219.0 716.0,210.0 722.0,211.0 724.0,218.0 732.0,220.0 745.0,219.0 756.0,217.0 762.0,211.0 771.0,207.7 773.4,203.0 781.0,190.0 781.0,176.4 788.5,173.3 801.2,175.4 811.1,180.4 821.0,178.2 829.5,180.4 839.4,177.5 850.7,176.8 864.9,173.3 879.0,174.7 886.1,175.4 888.9,170.5 897.4,164.8 904.5,164.8 905.9,173.3 900.2,183.2 907.3,180.4 915.8,176.1 921.4,179.0 913.0,167.6 928.5,163.4 935.6,162.0 942.7,159.1 950.0,158.4 950.0,312.0 947.5,318.0 937.2,323.1 929.5,333.4 925.7,348.9 919.2,355.3 914.0,343.7 909.0,330.9 905.0,318.0 897.3,315.4 893.5,307.7 875.4,303.8 860.0,302.5 864.0,312.0 867.0,318.0 855.0,327.0 846.0,333.0 822.0,340.6 817.5,342.0 834.0,345.0 841.6,346.6 834.0,360.0 822.0,372.0 813.0,381.0 807.9,396.0 808.6,411.4 810.8,422.9 806.5,428.6 796.5,434.3 793.6,441.5 795.0,448.6 790.8,454.4 786.5,460.1 785.0,464.4 779.3,471.5 772.9,477.3 760.0,490.0 700.0,490.0"/><polygon points="822.2,428.6 829.4,425.8 836.5,421.5 838.7,427.2 835.1,437.2 830.8,448.6 825.1,455.1 820.1,451.5 819.4,442.9 821.5,434.3"/><polygon points="927.0,352.0 931.0,351.5 932.5,358.0 929.0,362.0 926.5,357.0"/><polygon points="456.1,352.1 464.1,355.1 470.1,348.1 480.1,344.0 490.2,346.0 502.2,348.1 510.2,350.1 514.2,356.1 524.2,362.1 534.2,364.1 540.3,372.1 544.3,380.1 560.3,384.1 574.3,390.1 586.4,396.2 586.4,404.2 578.3,414.2 576.3,428.2 574.3,440.2 570.5,442.0 560.2,446.9 549.9,453.7 546.5,462.3 539.6,470.9 532.8,479.5 525.9,481.2 520.7,479.5 522.4,491.5 508.7,495.0 505.3,500.1 500.1,503.6 498.4,512.1 491.5,515.6 496.7,520.7 489.8,529.3 489.8,536.2 501.8,541.3 491.5,543.9 481.2,543.1 470.9,536.2 467.5,525.9 469.2,515.6 472.6,505.3 474.4,491.5 479.5,474.4 481.2,460.6 484.1,436.2 474.1,424.2 464.1,412.2 454.1,396.2 452.1,386.1 458.1,376.1 458.1,370.1 462.1,360.1"/><polygon points="510.4,532.0 516.0,531.0 520.7,533.0 515.0,534.5"/><polygon points="297.0,599.9 323.6,599.9 363.6,600.7 390.2,599.9 398.2,594.6 416.8,594.6 443.4,595.9 462.0,595.9 478.0,593.2 488.7,589.3 494.0,580.0 504.7,572.0 518.0,566.6 528.6,565.3 515.3,572.0 507.3,580.0 510.0,593.2 499.3,601.2 483.4,603.9 462.0,605.2 446.1,610.6 467.4,615.9 491.4,618.5 518.0,623.9 541.9,619.9 563.2,617.2 589.9,613.2 607.2,611.9 640.0,605.0 700.0,595.0 772.0,586.4 791.6,581.7 805.8,584.8 815.2,580.9 834.0,577.0 843.5,573.8 856.0,575.4 865.5,577.8 893.8,579.3 897.0,582.5 890.7,591.9 903.3,588.8 922.2,580.9 948.0,577.0 948.0,646.0 297.0,646.0"/><polygon points="529.0,612.0 545.0,609.0 563.0,611.0 555.0,617.0 535.0,617.0"/></clipPath>
<filter id="halo" x="-5%" y="-20%" width="110%" height="140%"><feMorphology operator="dilate" radius="1" in="SourceAlpha" result="d"/><feFlood flood-color="#ffffff" flood-opacity="0.55"/><feComposite in2="d" operator="in" result="w"/><feGaussianBlur in="w" stdDeviation="0.5" result="wb"/><feMerge><feMergeNode in="wb"/><feMergeNode in="SourceGraphic"/></feMerge></filter>
</defs>
<g clip-path="url(#mc)">
<rect x="297" y="145" width="651" height="500" fill="#9AB2CC"/>
<polygon points="297.0,174.2 312.8,171.9 322.3,174.2 336.5,175.0 352.3,176.6 363.4,179.0 376.0,178.2 388.7,176.6 399.8,178.2 407.7,181.4 411.0,176.0 419.0,172.0 429.0,173.5 436.0,177.0 446.0,174.0 452.0,174.0 456.0,180.0 452.0,186.0 461.0,192.0 477.2,198.9 483.7,205.3 490.1,206.6 500.4,201.5 509.4,210.5 522.3,222.1 530.0,229.8 524.0,233.0 514.0,234.0 506.0,238.0 511.0,243.0 500.0,248.0 482.5,255.2 477.0,257.2 468.8,265.8 461.9,274.4 455.0,282.9 451.6,291.5 455.0,305.3 450.0,301.0 444.7,291.5 427.5,290.7 410.4,293.2 403.5,298.4 401.8,305.3 403.5,317.3 410.4,325.9 420.7,325.9 424.1,319.0 434.4,317.3 429.3,325.9 431.0,332.8 443.0,336.2 448.2,343.1 458.5,353.4 464.0,355.0 467.0,359.0 461.9,356.8 455.0,351.6 448.2,353.4 439.6,348.2 431.0,341.3 420.7,336.2 406.9,332.8 393.2,329.3 381.2,320.7 379.4,315.6 369.0,302.0 356.0,288.0 364.0,303.0 367.4,311.3 361.0,306.0 353.0,295.0 347.0,285.0 344.9,286.3 338.0,279.4 330.0,270.3 324.3,258.9 325.4,249.7 324.3,236.0 312.9,226.9 297.0,208.6" fill="#C3E2C7" stroke="#A9A9B4" stroke-width="0.8"/>
<polygon points="320.7,160.8 336.5,160.0 347.6,164.0 363.4,164.8 376.0,162.4 385.5,168.7 391.8,175.0 372.9,175.8 352.3,173.5 341.3,168.7 320.7,167.1" fill="#C3E2C7" stroke="#A9A9B4" stroke-width="0.8"/>
<polygon points="328.6,156.0 338.0,154.5 349.2,155.0 345.0,157.8 331.0,157.6" fill="#C3E2C7" stroke="#A9A9B4" stroke-width="0.8"/>
<polygon points="349.2,155.0 362.0,152.9 379.2,155.0 372.0,159.2 356.0,158.5" fill="#C3E2C7" stroke="#A9A9B4" stroke-width="0.8"/>
<polygon points="382.4,152.0 395.0,151.3 403.0,155.0 398.0,159.2 385.0,158.0" fill="#C3E2C7" stroke="#A9A9B4" stroke-width="0.8"/>
<polygon points="388.7,162.0 400.0,160.8 407.7,164.0 402.0,168.7 391.0,167.5" fill="#C3E2C7" stroke="#A9A9B4" stroke-width="0.8"/>
<polygon points="407.7,162.0 418.0,160.8 423.5,163.0 418.0,167.1 410.0,166.0" fill="#C3E2C7" stroke="#A9A9B4" stroke-width="0.8"/>
<polygon points="404.5,153.0 430.0,151.3 455.0,152.0 450.0,158.0 430.0,160.8 410.0,159.0" fill="#C3E2C7" stroke="#A9A9B4" stroke-width="0.8"/>
<polygon points="379.0,147.0 410.0,145.0 471.0,145.0 466.0,150.0 430.0,151.3 395.0,151.3" fill="#C3E2C7" stroke="#A9A9B4" stroke-width="0.8"/>
<polygon points="425.7,166.7 438.6,162.2 457.9,162.9 477.2,169.3 492.7,174.5 509.4,182.2 503.0,188.6 497.8,195.0 490.1,192.5 477.2,188.6 466.9,184.0 461.8,178.3 456.6,173.2 448.9,173.2 438.6,171.9 428.3,170.6" fill="#C3E2C7" stroke="#A9A9B4" stroke-width="0.8"/>
<polygon points="514.0,227.0 526.0,226.0 534.5,238.6 530.0,242.0 520.0,240.0 513.7,234.0" fill="#C3E2C7" stroke="#A9A9B4" stroke-width="0.8"/>
<polygon points="441.3,313.9 451.6,312.1 461.9,315.6 470.5,319.9 461.9,319.5 448.2,316.8 442.1,316.8" fill="#C3E2C7" stroke="#A9A9B4" stroke-width="0.8"/>
<polygon points="476.0,320.0 483.0,319.0 490.0,322.0 486.0,325.0 477.0,324.0" fill="#FEF6B0" stroke="#A9A9B4" stroke-width="0.8"/>
<polygon points="476.2,145.0 638.8,144.7 637.2,152.6 638.8,158.9 627.8,163.6 626.2,171.5 621.5,174.6 605.7,177.8 594.7,179.3 590.0,182.5 578.2,184.5 567.8,193.5 560.0,202.4 555.9,200.5 544.4,192.9 541.5,183.3 541.5,174.6 531.9,168.0 525.2,162.2 517.5,156.4 503.1,155.0 488.8,153.5 476.3,148.8" fill="#FBCDB6" stroke="#A9A9B4" stroke-width="0.8"/>
<polygon points="619.8,185.6 630.1,183.5 646.8,184.5 651.0,187.6 638.5,192.8 623.9,190.8" fill="#C7C2E2" stroke="#A9A9B4" stroke-width="0.8"/>
<polygon points="678.0,206.0 688.0,208.0 684.0,214.0 690.0,219.0 695.0,224.0 694.0,229.0 686.0,231.0 676.0,232.5 680.0,227.0 676.0,222.0 681.0,218.0 676.0,214.0 673.0,210.0" fill="#FBCDB6" stroke="#A9A9B4" stroke-width="0.8"/>
<polygon points="661.0,222.0 668.0,217.5 675.0,219.0 675.0,225.0 666.0,228.5 660.5,226.0" fill="#C3E2C7" stroke="#A9A9B4" stroke-width="0.8"/>
<polygon points="726.0,146.0 745.0,145.5 763.0,147.0 752.0,152.0 735.0,152.0" fill="#C3E2C7" stroke="#A9A9B4" stroke-width="0.8"/>
<polygon points="843.6,167.6 853.5,160.6 867.7,156.3 881.8,154.2 893.2,153.5 887.5,155.6 870.5,159.1 859.2,164.8 856.4,171.2 846.5,169.8" fill="#FBCDB6" stroke="#A9A9B4" stroke-width="0.8"/>
<polygon points="925.0,156.0 940.0,154.0 950.0,156.0 950.0,162.0 935.0,161.0" fill="#FBCDB6" stroke="#A9A9B4" stroke-width="0.8"/>
<polygon points="713.0,209.0 706.0,203.0 707.0,195.0 716.0,188.0 730.0,180.0 744.0,174.0 761.0,171.5 776.0,170.3 781.0,176.4 781.0,190.0 773.4,201.7 761.3,202.9 756.5,198.0 761.3,189.6 758.9,184.8 754.1,186.0 743.2,195.7 739.6,207.7 735.0,214.0 732.4,217.4 728.0,212.0 724.0,208.0 718.0,209.0" fill="#FBCDB6" stroke="#A9A9B4" stroke-width="0.8"/>
<polygon points="690.0,252.0 688.0,243.0 679.0,237.0 686.0,233.0 693.0,232.0 700.0,228.0 706.0,222.0 713.0,219.0 716.0,210.0 722.0,211.0 724.0,218.0 732.0,220.0 745.0,219.0 756.0,217.0 762.0,211.0 771.0,207.7 773.4,203.0 781.0,190.0 781.0,176.4 788.5,173.3 801.2,175.4 811.1,180.4 821.0,178.2 829.5,180.4 839.4,177.5 850.7,176.8 864.9,173.3 879.0,174.7 886.1,175.4 888.9,170.5 897.4,164.8 904.5,164.8 905.9,173.3 900.2,183.2 907.3,180.4 915.8,176.1 921.4,179.0 913.0,167.6 928.5,163.4 935.6,162.0 942.7,159.1 950.0,158.4 950.0,312.0 947.5,318.0 937.2,323.1 929.5,333.4 925.7,348.9 919.2,355.3 914.0,343.7 909.0,330.9 905.0,318.0 897.3,315.4 893.5,307.7 875.4,303.8 860.0,302.5 864.0,312.0 867.0,318.0 855.0,327.0 846.0,333.0 822.0,340.6 817.5,342.0 834.0,345.0 841.6,346.6 834.0,360.0 822.0,372.0 813.0,381.0 807.9,396.0 808.6,411.4 810.8,422.9 806.5,428.6 796.5,434.3 793.6,441.5 795.0,448.6 790.8,454.4 786.5,460.1 785.0,464.4 779.3,471.5 772.9,477.3 760.0,490.0 700.0,490.0" fill="#FBCDB6" stroke="#A9A9B4" stroke-width="0.8"/>
<polygon points="822.2,428.6 829.4,425.8 836.5,421.5 838.7,427.2 835.1,437.2 830.8,448.6 825.1,455.1 820.1,451.5 819.4,442.9 821.5,434.3" fill="#C3E2C7" stroke="#A9A9B4" stroke-width="0.8"/>
<polygon points="927.0,352.0 931.0,351.5 932.5,358.0 929.0,362.0 926.5,357.0" fill="#FEF6B0" stroke="#A9A9B4" stroke-width="0.8"/>
<polygon points="456.1,352.1 464.1,355.1 470.1,348.1 480.1,344.0 490.2,346.0 502.2,348.1 510.2,350.1 514.2,356.1 524.2,362.1 534.2,364.1 540.3,372.1 544.3,380.1 560.3,384.1 574.3,390.1 586.4,396.2 586.4,404.2 578.3,414.2 576.3,428.2 574.3,440.2 570.5,442.0 560.2,446.9 549.9,453.7 546.5,462.3 539.6,470.9 532.8,479.5 525.9,481.2 520.7,479.5 522.4,491.5 508.7,495.0 505.3,500.1 500.1,503.6 498.4,512.1 491.5,515.6 496.7,520.7 489.8,529.3 489.8,536.2 501.8,541.3 491.5,543.9 481.2,543.1 470.9,536.2 467.5,525.9 469.2,515.6 472.6,505.3 474.4,491.5 479.5,474.4 481.2,460.6 484.1,436.2 474.1,424.2 464.1,412.2 454.1,396.2 452.1,386.1 458.1,376.1 458.1,370.1 462.1,360.1" fill="#FEF6B0" stroke="#A9A9B4" stroke-width="0.8"/>
<polygon points="510.4,532.0 516.0,531.0 520.7,533.0 515.0,534.5" fill="#C3E2C7" stroke="#A9A9B4" stroke-width="0.8"/>
<polygon points="297.0,599.9 323.6,599.9 363.6,600.7 390.2,599.9 398.2,594.6 416.8,594.6 443.4,595.9 462.0,595.9 478.0,593.2 488.7,589.3 494.0,580.0 504.7,572.0 518.0,566.6 528.6,565.3 515.3,572.0 507.3,580.0 510.0,593.2 499.3,601.2 483.4,603.9 462.0,605.2 446.1,610.6 467.4,615.9 491.4,618.5 518.0,623.9 541.9,619.9 563.2,617.2 589.9,613.2 607.2,611.9 640.0,605.0 700.0,595.0 772.0,586.4 791.6,581.7 805.8,584.8 815.2,580.9 834.0,577.0 843.5,573.8 856.0,575.4 865.5,577.8 893.8,579.3 897.0,582.5 890.7,591.9 903.3,588.8 922.2,580.9 948.0,577.0 948.0,646.0 297.0,646.0" fill="#C7C2E2" stroke="#A9A9B4" stroke-width="0.8"/>
<polygon points="529.0,612.0 545.0,609.0 563.0,611.0 555.0,617.0 535.0,617.0" fill="#C7C2E2" stroke="#A9A9B4" stroke-width="0.8"/>
<g clip-path="url(#lc)">
<polygon points="322.0,235.6 415.0,235.6 430.0,242.0 446.0,248.0 448.0,256.5 458.6,254.0 462.0,249.0 481.0,247.0 488.0,241.0 492.0,247.0 500.0,248.0 520.0,260.0 470.0,300.0 456.0,310.0 444.7,291.5 427.5,290.7 410.4,293.2 403.5,300.1 398.3,296.7 386.3,291.5 372.6,286.4 346.8,284.7 300.0,284.0" fill="#C7C2E2" stroke="#B0AEB8" stroke-width="0.6"/>
<polygon points="300.0,284.0 346.8,284.7 372.6,286.4 386.3,291.5 398.3,296.7 403.5,300.1 401.8,305.3 403.5,317.3 410.4,325.9 420.7,325.9 424.1,319.0 434.4,317.3 429.3,325.9 426.0,333.0 420.0,345.0 380.0,340.0" fill="#FBCDB6" stroke="#B0AEB8" stroke-width="0.6"/>
<polygon points="415.0,322.0 440.0,326.0 470.0,350.0 470.0,362.0 440.0,362.0 415.0,340.0" fill="#FBCDB6" stroke="#B0AEB8" stroke-width="0.6"/>
<polygon points="419.5,327.5 425.0,326.0 431.0,329.0 430.0,335.0 424.0,337.0 420.0,333.0" fill="#FEF6B0" stroke="#B0AEB8" stroke-width="0.6"/>
<polygon points="431.0,333.0 443.0,336.0 447.0,342.0 438.0,344.0 432.0,340.0" fill="#FBCDB6" stroke="#B0AEB8" stroke-width="0.6"/>
<polygon points="438.0,342.0 447.0,342.0 448.0,349.0 441.0,348.0" fill="#FEF6B0" stroke="#B0AEB8" stroke-width="0.6"/>
<polygon points="440.0,348.0 448.0,349.0 455.0,352.0 462.0,356.0 452.0,356.0" fill="#C7C2E2" stroke="#B0AEB8" stroke-width="0.6"/>
<polygon points="456.0,352.0 470.0,348.0 480.0,344.0 490.0,346.0 492.0,370.0 488.0,390.0 478.0,394.0 462.0,380.0 458.0,368.0" fill="#FBCDB6" stroke="#B0AEB8" stroke-width="0.6"/>
<polygon points="478.0,344.0 510.0,350.0 514.0,356.0 504.0,372.0 496.0,372.0 490.0,365.0 485.0,354.0" fill="#C3E2C7" stroke="#B0AEB8" stroke-width="0.6"/>
<polygon points="512.0,352.0 520.0,360.0 518.0,372.0 512.0,374.0 508.0,362.0" fill="#C7C2E2" stroke="#B0AEB8" stroke-width="0.6"/>
<polygon points="518.0,362.0 530.0,362.0 530.0,372.0 520.0,372.0" fill="#FBCDB6" stroke="#B0AEB8" stroke-width="0.6"/>
<polygon points="530.0,362.0 536.0,364.0 540.0,372.0 532.0,374.0" fill="#C3E2C7" stroke="#B0AEB8" stroke-width="0.6"/>
<polygon points="450.0,376.0 462.0,377.0 468.0,388.0 458.0,393.0 452.0,388.0" fill="#FEF6B0" stroke="#B0AEB8" stroke-width="0.6"/>
<polygon points="452.0,388.0 458.0,393.0 468.0,388.0 478.0,394.0 484.0,396.0 488.0,410.0 486.0,428.0 478.0,436.0 472.0,426.0 462.0,412.0 454.0,396.0" fill="#C3E2C7" stroke="#B0AEB8" stroke-width="0.6"/>
<polygon points="486.0,416.0 498.0,420.0 512.0,434.0 518.0,440.0 512.0,448.0 500.0,448.0 492.0,446.0 486.0,438.0 484.0,428.0" fill="#FBCDB6" stroke="#B0AEB8" stroke-width="0.6"/>
<polygon points="505.0,438.0 516.0,440.0 522.0,452.0 526.0,460.0 520.0,465.0 512.0,450.0 504.0,448.0" fill="#C7C2E2" stroke="#B0AEB8" stroke-width="0.6"/>
<polygon points="489.0,440.0 494.0,446.0 505.0,448.0 512.0,450.0 520.0,465.0 526.0,470.0 522.0,480.0 520.0,492.0 508.0,495.0 500.0,504.0 498.0,512.0 491.0,516.0 496.0,521.0 490.0,529.0 490.0,536.0 501.0,541.0 492.0,544.0 483.0,541.0 478.0,535.0 476.0,526.0 478.0,515.0 481.0,505.0 483.0,491.0 486.0,475.0 488.0,460.0" fill="#C3E2C7" stroke="#B0AEB8" stroke-width="0.6"/>
<polygon points="520.0,469.0 532.0,472.0 530.0,480.0 522.0,482.0 519.0,476.0" fill="#C7C2E2" stroke="#B0AEB8" stroke-width="0.6"/>
<polygon points="713.0,209.0 706.0,203.0 707.0,195.0 716.0,188.0 730.0,180.0 744.0,174.0 761.0,171.5 776.0,170.3 776.0,175.0 760.0,176.0 748.0,182.0 738.0,192.0 730.0,200.0 726.0,208.0 718.0,209.0" fill="#FEF6B0" stroke="#B0AEB8" stroke-width="0.6"/>
<polygon points="726.0,208.0 730.0,200.0 738.0,192.0 748.0,182.0 760.0,176.0 762.0,183.0 754.1,186.0 743.2,195.7 739.6,207.7 735.0,214.0 732.4,217.4 728.0,212.0" fill="#FBCDB6" stroke="#B0AEB8" stroke-width="0.6"/>
<polygon points="760.0,176.0 776.0,175.0 781.0,180.0 781.0,190.0 773.4,201.7 761.3,202.9 756.5,198.0 761.3,189.6 758.9,184.8 762.0,183.0" fill="#C7C2E2" stroke="#B0AEB8" stroke-width="0.6"/>
<polygon points="712.0,208.0 727.0,208.0 727.0,219.0 712.0,219.0" fill="#FEF6B0" stroke="#B0AEB8" stroke-width="0.6"/>
<polygon points="700.0,222.0 712.0,222.0 712.0,232.0 700.0,234.0" fill="#C7C2E2" stroke="#B0AEB8" stroke-width="0.6"/>
<polygon points="675.0,234.0 700.0,232.0 716.0,238.0 718.0,252.0 675.0,252.0" fill="#FEF6B0" stroke="#B0AEB8" stroke-width="0.6"/>
<polygon points="712.0,219.0 727.0,219.0 735.0,218.0 738.0,234.0 728.0,240.0 716.0,240.0 712.0,232.0" fill="#FBCDB6" stroke="#B0AEB8" stroke-width="0.6"/>
<polygon points="735.0,218.0 760.0,215.0 762.0,232.0 740.0,236.0 738.0,234.0" fill="#FEF6B0" stroke="#B0AEB8" stroke-width="0.6"/>
<polygon points="756.0,208.0 773.0,203.0 790.0,212.0 786.0,228.0 762.0,232.0 760.0,215.0" fill="#C7C2E2" stroke="#B0AEB8" stroke-width="0.6"/>
<polygon points="768.0,228.0 785.0,226.0 810.0,232.0 808.0,244.0 790.0,244.0 772.0,242.0" fill="#C3E2C7" stroke="#B0AEB8" stroke-width="0.6"/>
<polygon points="725.0,238.0 758.0,236.0 772.0,242.0 775.0,256.0 735.0,252.0" fill="#C7C2E2" stroke="#B0AEB8" stroke-width="0.6"/>
<polygon points="773.0,256.0 812.0,256.0 820.0,268.0 812.0,272.0 773.0,272.0" fill="#C7C2E2" stroke="#B0AEB8" stroke-width="0.6"/>
<polygon points="812.0,256.0 826.0,258.0 826.0,270.0 818.0,270.0" fill="#C3E2C7" stroke="#B0AEB8" stroke-width="0.6"/>
<polygon points="829.0,217.0 850.0,222.0 860.0,229.7 870.3,220.6 894.3,216.6 917.2,220.0 928.6,229.2 943.5,233.2 942.4,240.0 934.4,243.5 928.6,252.6 911.5,252.6 900.0,257.2 889.7,258.4 882.9,251.5 860.0,245.8 850.0,256.0 829.0,256.0 822.0,240.0" fill="#C7C2E2" stroke="#B0AEB8" stroke-width="0.6"/>
<polygon points="850.0,256.0 860.0,245.8 882.9,251.5 889.7,258.4 894.0,268.6 870.0,268.0 856.0,262.0" fill="#C3E2C7" stroke="#B0AEB8" stroke-width="0.6"/>
<polygon points="846.0,262.0 856.0,262.0 870.0,268.0 883.0,274.0 860.0,274.0 848.0,270.0" fill="#FBCDB6" stroke="#B0AEB8" stroke-width="0.6"/>
<polygon points="900.0,257.2 911.5,252.6 928.6,252.6 926.0,261.8 905.0,262.0" fill="#FBCDB6" stroke="#B0AEB8" stroke-width="0.6"/>
<polygon points="891.0,261.8 905.0,262.0 911.5,266.0 908.0,269.8 893.0,269.0" fill="#FEF6B0" stroke="#B0AEB8" stroke-width="0.6"/>
<polygon points="928.6,252.6 934.4,243.5 942.4,240.0 950.0,236.0 950.0,297.0 935.0,297.0 930.0,280.0 911.5,266.0 926.0,261.8" fill="#C3E2C7" stroke="#B0AEB8" stroke-width="0.6"/>
<polygon points="826.0,258.0 856.0,268.0 870.0,268.0 873.0,290.0 870.0,302.5 848.0,296.0 836.0,282.0 823.0,265.0" fill="#FEF6B0" stroke="#B0AEB8" stroke-width="0.6"/>
<polygon points="870.0,266.0 901.0,262.0 895.0,285.0 875.0,292.0" fill="#C7C2E2" stroke="#B0AEB8" stroke-width="0.6"/>
<polygon points="875.0,292.0 895.0,285.0 905.0,275.0 919.0,276.0 905.0,300.0 895.0,308.0 875.0,304.0" fill="#FBCDB6" stroke="#B0AEB8" stroke-width="0.6"/>
<polygon points="905.0,276.0 918.0,276.0 935.0,290.0 950.0,300.0 950.0,312.0 937.0,323.0 929.5,333.0 925.7,349.0 919.0,355.0 909.0,331.0 897.0,315.0 895.0,308.0 905.0,300.0" fill="#C7C2E2" stroke="#B0AEB8" stroke-width="0.6"/>
<polygon points="929.0,292.0 950.0,297.0 950.0,302.0 935.0,300.0" fill="#FEF6B0" stroke="#B0AEB8" stroke-width="0.6"/>
<polygon points="773.0,272.0 796.7,272.5 806.0,276.0 810.0,285.0 800.0,290.0 790.0,286.0 782.0,288.0 773.0,288.0" fill="#FEF6B0" stroke="#B0AEB8" stroke-width="0.6"/>
<polygon points="806.0,276.0 823.0,272.0 830.0,288.0 818.0,292.0 808.0,290.0" fill="#C3E2C7" stroke="#B0AEB8" stroke-width="0.6"/>
<polygon points="785.0,290.0 800.0,290.0 818.0,292.0 833.0,292.0 846.0,300.0 858.0,304.0 864.0,312.0 855.0,327.0 846.0,333.0 822.0,340.6 817.5,337.6 807.0,321.0 798.0,303.0" fill="#FBCDB6" stroke="#B0AEB8" stroke-width="0.6"/>
<polygon points="846.0,313.0 858.0,301.0 867.0,318.0 855.0,327.0 846.0,328.0" fill="#C3E2C7" stroke="#B0AEB8" stroke-width="0.6"/>
<polygon points="812.0,334.0 822.0,328.0 846.0,328.0 846.0,333.0 822.0,340.6 817.0,339.0" fill="#FEF6B0" stroke="#B0AEB8" stroke-width="0.6"/>
<polygon points="700.0,288.0 795.0,288.0 795.0,300.0 800.0,315.0 760.0,315.0 700.0,315.0" fill="#FEF6B0" stroke="#B0AEB8" stroke-width="0.6"/>
<polygon points="700.0,315.0 804.0,315.0 813.0,333.0 810.0,342.0 792.0,340.0 790.0,355.0 792.0,366.0 700.0,368.0" fill="#C3E2C7" stroke="#B0AEB8" stroke-width="0.6"/>
<polygon points="790.0,340.0 817.0,342.0 834.0,345.0 822.0,362.0 812.0,369.0 795.0,368.0 790.0,355.0" fill="#FEF6B0" stroke="#B0AEB8" stroke-width="0.6"/>
<polygon points="834.0,345.0 841.6,346.6 834.0,360.0 822.0,372.0 813.0,381.0 807.0,396.0 800.0,378.0 812.0,369.0 822.0,362.0" fill="#C3E2C7" stroke="#B0AEB8" stroke-width="0.6"/>
<polygon points="700.0,366.0 792.0,366.0 794.0,382.0 776.0,383.0 700.0,384.0" fill="#C7C2E2" stroke="#B0AEB8" stroke-width="0.6"/>
<polygon points="792.0,366.0 800.0,364.0 812.0,369.0 808.0,392.0 800.0,386.0 794.0,382.0" fill="#FBCDB6" stroke="#B0AEB8" stroke-width="0.6"/>
<polygon points="776.0,383.0 802.0,385.0 807.9,396.0 808.6,411.0 795.0,412.0 778.0,411.0 774.0,400.0" fill="#FEF6B0" stroke="#B0AEB8" stroke-width="0.6"/>
<polygon points="700.0,395.0 774.0,395.0 780.0,411.0 785.0,424.0 776.0,428.0 700.0,428.0" fill="#C3E2C7" stroke="#B0AEB8" stroke-width="0.6"/>
<polygon points="780.0,411.0 808.6,411.4 810.8,422.9 806.5,428.6 796.5,434.3 793.6,441.5 795.0,448.6 790.8,454.4 786.0,458.0 782.0,446.0 788.0,430.0 784.0,418.0" fill="#C7C2E2" stroke="#B0AEB8" stroke-width="0.6"/>
<polygon points="700.0,426.0 786.0,426.0 788.0,445.0 700.0,445.0" fill="#FEF6B0" stroke="#B0AEB8" stroke-width="0.6"/>
<polygon points="700.0,445.0 788.0,445.0 786.5,460.1 779.3,471.5 772.9,477.3 700.0,490.0" fill="#C3E2C7" stroke="#B0AEB8" stroke-width="0.6"/>
<polygon points="781.0,408.0 784.0,408.0 786.0,424.0 782.0,426.0" fill="#FBCDB6" stroke="#B0AEB8" stroke-width="0.6"/>
</g>
<polygon points="414.0,190.0 425.0,188.0 436.0,186.5 449.0,186.0 452.0,178.0 456.0,175.0 461.0,178.0 461.0,190.0 461.8,196.3 461.8,204.0 465.6,210.5 464.4,214.4 457.9,219.5 459.2,226.0 456.6,228.5 454.0,227.2 448.9,222.0 448.9,219.5 438.6,215.6 419.3,211.8 411.6,204.0" fill="#9AB2CC" stroke="#A9A9B4" stroke-width="0.8"/>
<polygon points="461.0,192.0 477.0,189.0 490.0,192.5 500.4,199.0 509.4,202.0 505.0,207.0 490.0,206.6 483.7,205.3 477.2,198.9 460.5,196.0" fill="#9AB2CC" stroke="#A9A9B4" stroke-width="0.8"/>
<polygon points="773.1,245.7 782.6,244.2 793.6,245.7 803.0,242.6 809.3,250.5 812.5,256.7 801.5,258.3 788.9,256.7 776.3,258.3 773.1,253.6" fill="#9AB2CC" stroke="#A9A9B4" stroke-width="0.8"/>
<polygon points="700.0,252.0 735.0,254.0 760.0,262.0 772.4,270.0 796.7,272.5 793.6,285.0 785.7,288.2 700.0,288.0" fill="#9AB2CC" stroke="#A9A9B4" stroke-width="0.8"/>
<polygon points="789.0,291.0 791.5,294.5 799.0,305.0 805.0,313.0 810.9,322.8 817.2,337.0 815.0,341.0 806.2,331.0 798.0,318.0 792.0,305.0 788.5,297.0" fill="#9AB2CC" stroke="#A9A9B4" stroke-width="0.8"/>
<polygon points="833.0,291.4 840.8,299.2 851.8,304.0 858.1,300.8 855.0,308.7 845.5,307.0 836.0,299.2" fill="#9AB2CC" stroke="#A9A9B4" stroke-width="0.8"/>
<polygon points="785.7,181.0 795.0,180.4 811.0,181.0 808.3,186.0 798.4,191.7 788.5,185.5" fill="#9AB2CC" stroke="#A9A9B4" stroke-width="0.8"/>
<polygon points="434.7,188.0 445.0,186.0 454.0,188.5 450.0,193.8 438.0,193.0" fill="#C3E2C7" stroke="#A9A9B4" stroke-width="0.8"/>
<polygon points="450.0,609.5 470.0,607.5 474.0,611.0 460.0,613.0" fill="#C7C2E2" stroke="#A9A9B4" stroke-width="0.8"/>
<polygon points="480.7,611.4 497.0,610.0 499.0,614.0 484.0,614.5" fill="#C7C2E2" stroke="#A9A9B4" stroke-width="0.8"/>
<polygon points="494.0,615.5 510.0,615.0 512.0,618.0 497.0,618.5" fill="#C7C2E2" stroke="#A9A9B4" stroke-width="0.8"/>
<polygon points="584.5,609.0 607.0,606.5 607.0,613.0 590.0,614.0" fill="#C7C2E2" stroke="#A9A9B4" stroke-width="0.8"/>
<g stroke="#8C8C99" stroke-opacity="0.22" stroke-width="0.8" stroke-dasharray="1.5 1.5"><line x1="337.0" y1="145" x2="337.0" y2="645"/><line x1="396.0" y1="145" x2="396.0" y2="645"/><line x1="454.9" y1="145" x2="454.9" y2="645"/><line x1="513.9" y1="145" x2="513.9" y2="645"/><line x1="572.8" y1="145" x2="572.8" y2="645"/><line x1="631.8" y1="145" x2="631.8" y2="645"/><line x1="690.8" y1="145" x2="690.8" y2="645"/><line x1="749.7" y1="145" x2="749.7" y2="645"/><line x1="808.7" y1="145" x2="808.7" y2="645"/><line x1="867.6" y1="145" x2="867.6" y2="645"/><line x1="926.6" y1="145" x2="926.6" y2="645"/><line x1="297" y1="601.5" x2="948" y2="601.5"/><line x1="297" y1="557.2" x2="948" y2="557.2"/><line x1="297" y1="513.0" x2="948" y2="513.0"/><line x1="297" y1="468.7" x2="948" y2="468.7"/><line x1="297" y1="424.4" x2="948" y2="424.4"/><line x1="297" y1="380.2" x2="948" y2="380.2"/><line x1="297" y1="335.9" x2="948" y2="335.9"/><line x1="297" y1="291.7" x2="948" y2="291.7"/><line x1="297" y1="247.4" x2="948" y2="247.4"/><line x1="297" y1="203.2" x2="948" y2="203.2"/><line x1="297" y1="158.9" x2="948" y2="158.9"/></g>
<path d="M605,185 L622,178 L638,172" stroke="#2E7F86" stroke-width="1.2" fill="none"/>
<path d="M886,175 L885,181 L870,189 L866,200 L866,214 L860,226 L847,241" stroke="#2E7F86" stroke-width="1.2" fill="none"/>
<path d="M809,251 L820,254 L832,259 L836,257" stroke="#2E7F86" stroke-width="1.2" fill="none"/>
<text x="349" y="247.9" font-size="14.3" fill="#D000F0" stroke="#D000F0" stroke-width="0.35" style="" filter="url(#halo)">NORTH AMERICA</text>
<text x="716.3" y="235.0" font-size="14.3" fill="#D000F0" stroke="#D000F0" stroke-width="0.35" style="" filter="url(#halo)">EUROPE</text>
<text x="463" y="417.9" font-size="14.3" fill="#D000F0" stroke="#D000F0" stroke-width="0.35" style="" filter="url(#halo)">SOUTH AMERICA</text>
<text x="774" y="621.5" font-size="14.3" fill="#D000F0" stroke="#D000F0" stroke-width="0.35" style="" filter="url(#halo)">TARCTICA</text>
<text x="477" y="292.4" font-size="18" fill="#17A6E6" stroke="#17A6E6" stroke-width="0.35" style="font-style:italic;letter-spacing:0.85px;" >ATLANTIC OCEAN</text>
<text x="827.2" y="426.8" font-size="18" fill="#17A6E6" stroke="#17A6E6" stroke-width="0.35" style="font-style:italic;letter-spacing:0.85px;" >INDIAN OCEAN</text>
<text x="317.5" y="373" text-anchor="end" font-size="18" fill="#17A6E6" stroke="#17A6E6" stroke-width="0.3" style="font-style:italic;letter-spacing:0.85px;">Pacific Ocean</text>
<text x="943" y="236.5" font-size="14.3" fill="#D000F0" stroke="#D000F0" stroke-width="0.35" style="" filter="url(#halo)">ASIA</text>
</g></svg>
<svg class="a" style="left:520px;top:676px" width="432" height="22" viewBox="520 676 432 22">
<path d="M528 685.5 H538 M530 683.5 L528 685.5 L530 687.5 M536 687.5 L538 689.5 L536 691.5 M528 689.5 H538" fill="none" stroke="#6A7480" stroke-width="1"/>
<path d="M869.5 690 V680.5 H876 L877.5 682" fill="none" stroke="#8A8A8A"/>
<path d="M872.5 684 H878 L880.5 686.5 V691.5 H872.5 Z" fill="#fff" stroke="#5A6470"/><path d="M874 688 H879 M874 689.8 H879" stroke="#5C8FC9" stroke-width="0.9"/>
<path d="M891.5 690.5 V682.5 H899.5 V684" fill="none" stroke="#8A8A8A"/><path d="M894 682.5 V681 H897 V682.5" fill="none" stroke="#8A8A8A"/>
<path d="M896.5 685 H900.5 L902 686.5 V691.5 H896.5 Z" fill="#fff" stroke="#5A6470"/><path d="M897.5 688.5 H901 M897.5 690 H901" stroke="#5C8FC9" stroke-width="0.8"/>
<rect x="919.5" y="680.5" width="10.5" height="11" fill="#fff" stroke="#5A6470"/><rect x="919" y="680.5" width="1.6" height="11.5" fill="#5A6470"/>
<path d="M922 679.5 H925 V686 L923.5 684.7 L922 686 Z" fill="#3E7CC0"/>
</svg>

<div class="t" style="left:303.4px;top:681px">Objects: 0</div>
<div class="sep" style="left:355px;top:677px;height:19px"></div>
<div class="t" style="left:363.6px;top:681px">Scale:</div>
<div class="sep" style="left:397px;top:677px;height:19px"></div>
<div class="a" style="left:401px;top:678px;width:117px;height:16px;background:#fff;border:1px solid #B9B9B9"></div>
<div class="a" style="left:504px;top:679px;width:13px;height:14px;border-left:1px solid #CFCFCF;background:#F2F2F2"></div>
<div class="t" style="left:405px;top:681px">1:119,060,161.476904</div>
<div class="a" style="left:508px;top:685px;width:0;height:0;border-left:3px solid transparent;border-right:3px solid transparent;border-top:3px solid #444"></div>
<div class="a" style="left:547px;top:678px;width:46px;height:16px;background:#F0F0F0;border:1px solid #CCCCCC"></div>
<div class="t" style="left:551px;top:681px">Longit...</div>
<div class="a" style="left:601px;top:678px;width:20px;height:16px;background:#fff;border:1px solid #B9B9B9"></div>
<div class="a" style="left:785px;top:678px;width:76px;height:16px;background:#fff;border:1px solid #B9B9B9"></div>
<div class="t" style="left:789px;top:681px">-10.465458</div>
<div class="sep" style="left:910px;top:679px;height:16px"></div>
<div class="a" style="left:941px;top:132px;width:0;height:0;border-left:4px solid transparent;border-right:4px solid transparent;border-top:5px solid #333"></div>
<div class="a" style="left:939px;top:684px;width:0;height:0;border-left:3px solid transparent;border-right:3px solid transparent;border-top:3px solid #333"></div>

<!-- CATALOG -->
<div class="panel" style="left:953px;top:123px;width:248px;height:573px"></div>
<div class="ptitle" style="left:964px;top:133px">Catalog Manager</div>
<div class="a" style="left:955px;top:155px;width:244px;height:28px;background:#fff"></div>
<div class="a" style="left:1031px;top:160px;width:165px;height:19px;background:#fff;border:1px solid #7A7A7A"></div>
<div class="t" style="left:1036px;top:164px;color:#8a8a8a;-webkit-text-stroke:0.1px #8a8a8a">Search...</div>
<div class="tree" style="left:960px;top:186px;width:236px;height:493px;border-color:#C9C9C9"></div>
<div class="a" style="left:991px;top:187px;width:203px;height:20px;background:#DADADA"></div>
<div class="t" style="left:994px;top:191px">Recent Used</div>
<div class="t" style="left:1009px;top:212px">Workspace</div>
<div class="t" style="left:1009px;top:233px">Datasources</div>
<div class="t" style="left:994px;top:254px">Home_D:\supermap_software\ISPE912\supe...</div>
<div class="t" style="left:994px;top:275px">Folder Connections</div>
<div class="t" style="left:994px;top:296px">DataBase</div>
<div class="t" style="left:994px;top:316px">Online Services</div>
<svg class="a" style="left:950px;top:150px" width="252" height="185" viewBox="950 150 252 185">
<g fill="none" stroke="#3E7CC0" stroke-width="1">
<path d="M959.5 174.5 V163.5 H964.5 L966 165.5 H973.5 V170"/><path d="M959.5 174.5 H968"/><path d="M971 168.5 V176.5 M967 172.5 H975" stroke-width="1.2"/>
<path d="M982 165.5 H996.5 M985 165.5 V176 H993.5 V165.5 M986.5 163 H992 M987.5 168 V174 M989.3 168 V174 M991.1 168 V174"/>
<path d="M1012.5 163.3 A6 6 0 0 0 1011.5 174.6" stroke-width="1.1"/><path d="M1010.8 172.2 L1011.6 174.8 L1009 175.4" stroke-width="1"/>
<path d="M1016 174.7 A6 6 0 0 0 1017 163.4" stroke-width="1.1"/><path d="M1017.7 165.8 L1016.9 163.2 L1019.5 162.6" stroke-width="1"/>
</g>
<path d="M1028.5 159 V180" stroke="#D5D5D5"/>
<circle cx="1187" cy="168.5" r="4.2" fill="none" stroke="#3E7CC0" stroke-width="1.3"/><path d="M1190 171.5 L1193 174.5" stroke="#3E7CC0" stroke-width="1.6"/>
<!-- tree arrows -->
<path d="M966 199.5 L970.5 199.5 L970.5 195 Z" fill="#404040"/>
<path d="M982.5 215 L986 218 L982.5 221 Z M982.5 236 L986 239 L982.5 242 Z M967 257 L970.5 260 L967 263 Z M967 278 L970.5 281 L967 284 Z M967 299 L970.5 302 L967 305 Z M967 319 L970.5 322 L967 325 Z" fill="#404040"/>
<g fill="none" stroke="#3E7CC0" stroke-width="1">
<circle cx="983.3" cy="197.3" r="5.8"/><path d="M983.3 193.5 V197.5 H986.5"/>
<rect x="992.5" y="212.5" width="10.5" height="11"/><rect x="995.5" y="216.5" width="5" height="4" fill="#8A98A8" stroke="none"/>
<path d="M993 234.5 Q998 232 1003 234.5 V243 Q998 245.5 993 243 Z M993 234.5 Q998 237 1003 234.5 M993 238.7 Q998 241.2 1003 238.7"/>
<path d="M977.5 260 L983.5 254 L989.5 260 M979 259 V265.5 H988 V259 M982 265.5 V261.5 H985 V265.5"/>
<path d="M982 282.5 H980.5 A3.3 3.3 0 0 1 980.5 276 H985.5 A3.3 3.3 0 0 1 987.5 277.2"/><path d="M985 279 H986.5 A3.3 3.3 0 0 1 986.5 285.5 H981.5 A3.3 3.3 0 0 1 979.5 284.3"/>
<path d="M978.5 296.5 Q983.5 294 988.5 296.5 V303.5 Q983.5 306 978.5 303.5 Z M978.5 296.5 Q983.5 299 988.5 296.5 M978.5 300 Q983.5 302.5 988.5 300 M977 307.5 H990 M983.5 305 V307.5"/>
<circle cx="983.3" cy="322" r="5.8"/><ellipse cx="983.3" cy="322" rx="2.6" ry="5.8"/><path d="M977.5 322 H989 M978.5 319 H988 M978.5 325 H988"/>
</g>
</svg>


<svg class="a" style="left:257px;top:134px" width="28" height="12" viewBox="257 134 28 12"><rect x="259.3" y="136" width="4.7" height="4.3" fill="#6A6A6A"/><rect x="259.3" y="136.8" width="1.6" height="3" fill="#BDBDBD"/><rect x="258.8" y="140.2" width="5.7" height="1" fill="#6A6A6A"/><rect x="261.3" y="141" width="1" height="2.2" fill="#6A6A6A"/><path d="M274 136.3 L281 141.6 M281 136.3 L274 141.6" stroke="#666" stroke-width="1.5"/></svg>
<svg class="a" style="left:257px;top:423px" width="28" height="12" viewBox="257 423 28 12"><rect x="259.3" y="425" width="4.7" height="4.3" fill="#6A6A6A"/><rect x="259.3" y="425.8" width="1.6" height="3" fill="#BDBDBD"/><rect x="258.8" y="429.2" width="5.7" height="1" fill="#6A6A6A"/><rect x="261.3" y="430" width="1" height="2.2" fill="#6A6A6A"/><path d="M274 425.3 L281 430.6 M281 425.3 L274 430.6" stroke="#666" stroke-width="1.5"/></svg>
<svg class="a" style="left:1164px;top:134px" width="28" height="12" viewBox="1164 134 28 12"><rect x="1166.3" y="136" width="4.7" height="4.3" fill="#6A6A6A"/><rect x="1166.3" y="136.8" width="1.6" height="3" fill="#BDBDBD"/><rect x="1165.8" y="140.2" width="5.7" height="1" fill="#6A6A6A"/><rect x="1168.3" y="141" width="1" height="2.2" fill="#6A6A6A"/><path d="M1181 136.3 L1188 141.6 M1188 136.3 L1181 141.6" stroke="#666" stroke-width="1.5"/></svg>
<!-- CONTEXT MENU -->
<div class="a" style="left:607px;top:248px;width:165px;height:460px;background:#FCFCFC;border:1px solid #7A7A7A;box-shadow:2px 2px 2px rgba(0,0,0,0.45)">
<div class="a" style="left:0;top:0;width:20px;height:460px;background:#F0F0F0"></div>
<div class="mi" style="top:5px;color:#8d8d8d;-webkit-text-stroke:0.1px #8d8d8d">Paste</div>
<div class="mi" style="top:23px">Pick Up Coordinates</div>
<div class="msep" style="top:40px"></div>
<div class="a" style="left:1px;top:43px;width:17px;height:17px;background:#CCE4F7;border:1px solid #7EB4EA"></div>
<div class="mi" style="top:47px">Select</div>
<div class="mi" style="top:65px">Pan</div>
<div class="mi" style="top:83px">Zoom In</div>
<div class="mi" style="top:102px">Zoom Out</div>
<div class="mi" style="top:120px">Refresh</div>
<div class="mi" style="top:138px">Full Extent</div>
<div class="mi" style="top:157px">Fit to Window</div>
<div class="mi" style="top:175px">Show Navigation Bar</div>
<div class="mi" style="top:193px;color:#8d8d8d;-webkit-text-stroke:0.1px #8d8d8d">Show Cache Play Bar</div>
<div class="msep" style="top:211px"></div>
<div class="mi" style="top:217px">Map Tile(Single-task)...</div>
<div class="mi" style="top:236px">Map Tile(Multi-task)...</div>
<div class="a" style="left:1px;top:250px;width:161px;height:18px;background:#CCE4F7;border:1px solid #99C9EF"></div>
<div class="mi" style="top:254px">Vector Tile Style...</div>
<div class="msep" style="top:271px"></div>
<div class="mi" style="top:277px">Save Map</div>
<div class="mi" style="top:295px">Save Map As...</div>
<div class="mi" style="top:313px">Save as Image Dataset...</div>
<div class="mi" style="top:332px">Save as Map Template...</div>
<div class="mi" style="top:350px">Export to Picture...</div>
<div class="mi" style="top:368px">Export to PDF...</div>
<div class="msep" style="top:387px"></div>
<div class="mi" style="top:392px">Rename...</div>
<div class="mi" style="top:410px">Reassign Dataset...</div>
<div class="msep" style="top:428px"></div>
<div class="mi" style="top:434px">Search and Location</div>
</div>
<svg class="a" style="left:600px;top:245px" width="180" height="454" viewBox="600 245 180 454">
<g fill="none" stroke-width="1">
<path d="M612 254 H619.5 V265 H612 Z" fill="#D4D4D4" stroke="#C2C2C2"/><path d="M614 253 H617.5 V255 H614 Z" fill="#BDBDBD"/><path d="M617 258.5 H621.5 L624 261 V265.5 H617 Z" fill="#fff" stroke="#B0B0B0"/>
<path d="M613.5 300.5 L616.3 303.3 L621 297.5" stroke="#222" stroke-width="1.5"/>
<path d="M614.5 320.5 V317 Q614.5 316 615.5 316 Q616.5 316 616.5 317 V319 V314.5 Q616.5 313.5 617.5 313.5 Q618.5 313.5 618.5 314.5 V318.5 V315 Q618.5 314 619.5 314 Q620.5 314 620.5 315 V319 V316.5 Q620.5 315.5 621.5 315.5 Q622.5 315.5 622.5 316.5 V321 Q622.5 325 619 325 Q616.5 325 615.5 323 L613 319.5 Q613 318.5 614 318.8 Z" stroke="#555"/>
<circle cx="616" cy="336" r="3.9" stroke="#6A6A6A"/><path d="M618.8 338.8 L622.5 342.5" stroke="#6A6A6A" stroke-width="1.6"/><path d="M614 336 H618 M616 334 V338" stroke="#3E7CC0"/>
<circle cx="616" cy="354.5" r="3.9" stroke="#6A6A6A"/><path d="M618.8 357.3 L622.5 361" stroke="#6A6A6A" stroke-width="1.6"/><path d="M614 354.5 H618" stroke="#3E7CC0"/>
<path d="M612.5 372 A5.5 5.5 0 0 1 622.5 371.5 M612.5 375.5 A5.5 5.5 0 0 0 622.5 376" stroke="#2E86D6" stroke-width="1.8"/>
<path d="M620.5 369 L623.5 372.5 L619.8 373" fill="#2E86D6" stroke="#2E86D6"/><path d="M614.5 378.8 L611.5 375.3 L615.2 374.8" fill="#2E86D6" stroke="#2E86D6"/>
<rect x="611.5" y="387.5" width="12" height="10" stroke="#707070"/><path d="M613.5 391 V389.5 H615 M620 389.5 H621.5 V391 M621.5 394 V395.5 H620 M615 395.5 H613.5 V394" stroke="#3E7CC0"/>
<circle cx="617.5" cy="429.3" r="5.8" stroke="#6A6A6A"/><path d="M617.5 426 L620.5 429.3 L617.5 432.6 L614.5 429.3 Z" stroke="#5C8FC9" stroke-width="0.8" stroke-dasharray="1.2 0.8"/>
<path d="M611.5 466 L614.5 465 L617.5 466.5 L621 465.5 V472 M611.5 466 V477 L614.5 476 M614.5 465 V476" stroke="#5C8FC9"/>
<path d="M611.5 484 L614.5 483 L617.5 484.5 L621 483.5 V490 M611.5 484 V495 L614.5 494 M614.5 483 V494" stroke="#5C8FC9"/>
<path d="M611.5 582 H622 V586 M611.5 582 V591.5 H616" stroke="#5C8FC9"/><path d="M614 584.5 L620 589 M617.5 589.5 H623.5 M622 587.8 L623.8 589.5 L622 591.2" stroke="#3E7CC0"/>
<rect x="612.5" y="601.5" width="11" height="7.5" stroke="#8A8A8A"/><path d="M614 607.5 L617 604 L620 607.5" stroke="#E0A030"/><path d="M612 600 H617 M615.5 598.5 L617 600 L615.5 601.5" stroke="#3E7CC0"/>
<rect x="612.5" y="618.5" width="11" height="9.5" stroke="#8A8A8A"/><path d="M612 617.5 H617 M615.5 616 L617 617.5 L615.5 619" stroke="#3E7CC0"/><text x="614.5" y="626.5" font-size="4.5" fill="#5C8FC9">PDF</text>
<rect x="612.5" y="643" width="7" height="6" stroke="#9A9A9A" fill="#E4E4E4"/><path d="M620.5 641 V651.5 M619 641 H622 M619 651.5 H622" stroke="#3E7CC0"/>
<path d="M612 683 L615 682 L619 683.5 L623 682 V692 L619 693.5 L615 692 L612 693 Z" stroke="#5C8FC9"/>
</g>
<g fill="#4B83C4"><rect x="616" y="472" width="1.8" height="1.8"/><rect x="618.5" y="472" width="1.8" height="1.8"/><rect x="616" y="474.5" width="1.8" height="1.8"/><rect x="618.5" y="474.5" width="1.8" height="1.8"/><rect x="621" y="474.5" width="1.8" height="1.8"/><rect x="616" y="469.5" width="1.8" height="1.8"/>
<rect x="616" y="490" width="1.8" height="1.8"/><rect x="618.5" y="490" width="1.8" height="1.8"/><rect x="616" y="492.5" width="1.8" height="1.8"/><rect x="618.5" y="492.5" width="1.8" height="1.8"/><rect x="621" y="492.5" width="1.8" height="1.8"/><rect x="616" y="487.5" width="1.8" height="1.8"/></g>
<path d="M621.5 470 L622.5 469 L623.5 470 L622.5 471 Z M621.5 488 L622.5 487 L623.5 488 L622.5 489 Z" fill="#3A9A78"/>
<path d="M620 694 L617.2 690 Q616.5 689 616.7 688 Q617.2 685.5 620 685.5 Q622.8 685.5 623.3 688 Q623.5 689 622.8 690 Z" fill="#E0623A"/><circle cx="620" cy="688.2" r="1" fill="#fff"/>
</svg>

<svg class="a" style="left:615px;top:485px" width="125" height="45" viewBox="615 485 125 45"><defs><filter id="es" x="-20%" y="-50%" width="140%" height="200%"><feGaussianBlur stdDeviation="1.6"/></filter></defs>
<ellipse cx="678.5" cy="509.5" rx="49" ry="11" fill="none" stroke="#000" stroke-opacity="0.35" stroke-width="2.5" filter="url(#es)"/>
<ellipse cx="677.1" cy="506.4" rx="49.2" ry="10.9" fill="none" stroke="#B5161F" stroke-width="2.3"/></svg>

</body></html>
